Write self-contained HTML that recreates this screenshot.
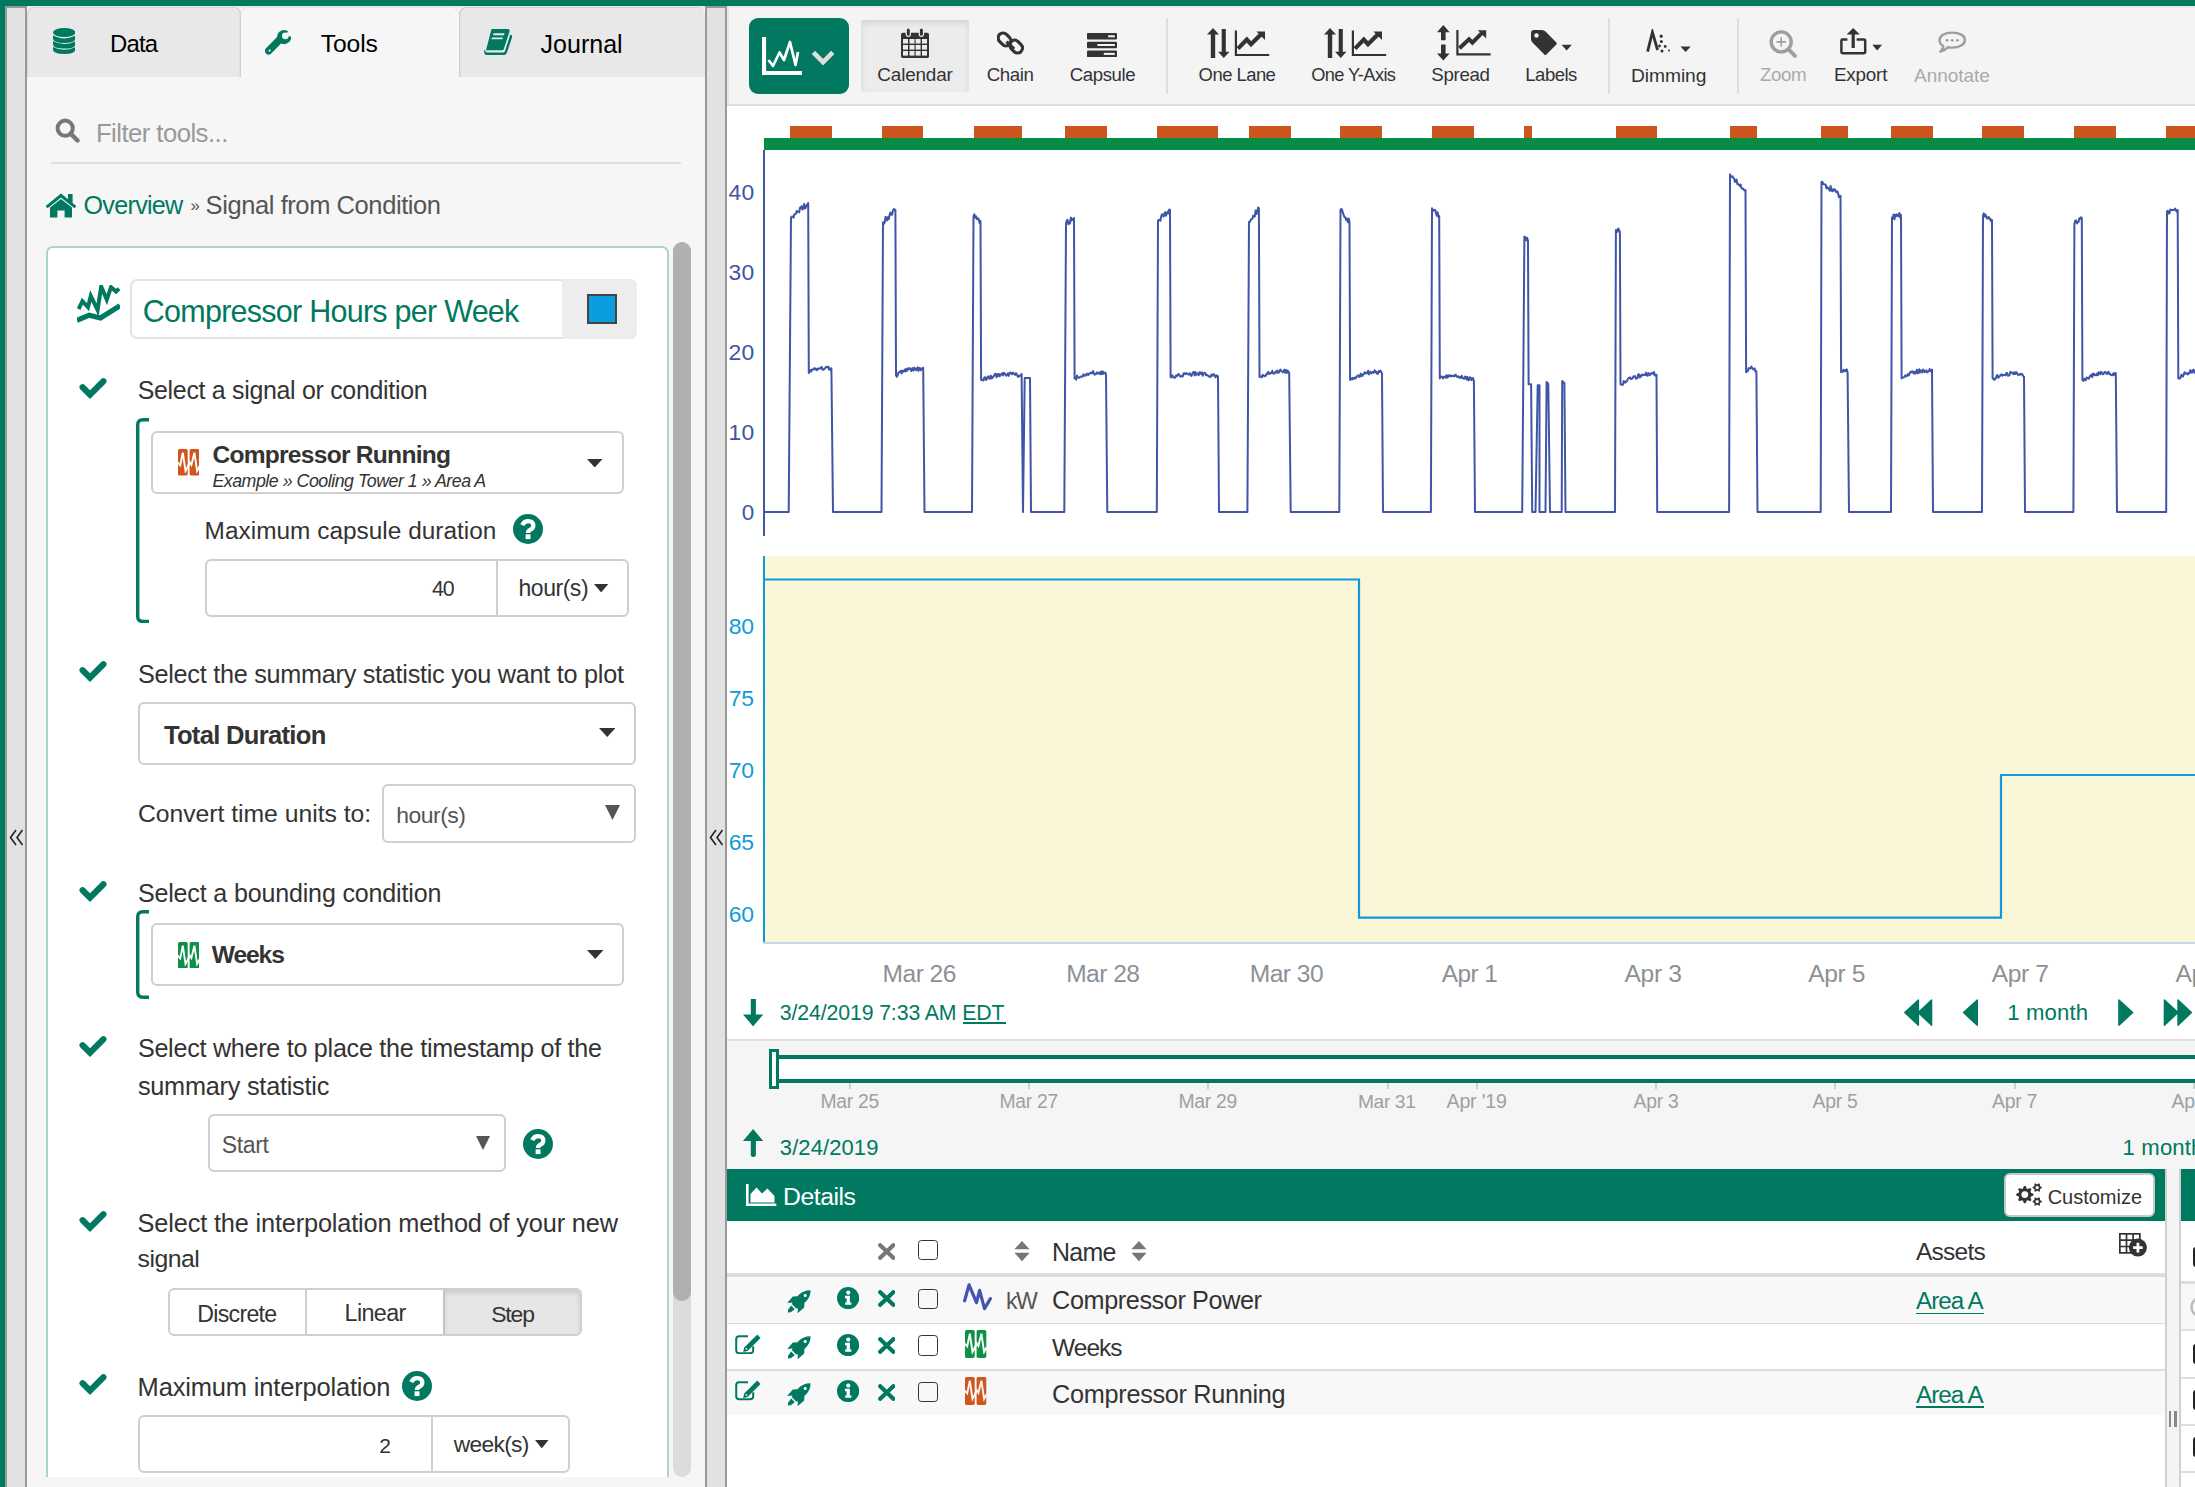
<!DOCTYPE html>
<html><head><meta charset="utf-8"><title>Seeq</title>
<style>html,body{margin:0;padding:0;width:2195px;height:1487px;overflow:hidden;background:#fff;font-family:"Liberation Sans",sans-serif}
body{position:relative}</style></head><body>
<div style="position:absolute;left:0.00px;top:0.00px;width:2195.00px;height:1487.00px;background:#fff"></div>
<div style="position:absolute;left:5.00px;top:6.00px;width:22.00px;height:1481.00px;background:#e2e2e2"></div>
<div style="position:absolute;left:5.00px;top:6.00px;width:2.00px;height:1481.00px;background:#999"></div>
<div style="position:absolute;left:25.00px;top:6.00px;width:2.00px;height:1481.00px;background:#999"></div>
<div style="position:absolute;left:27.00px;top:6.00px;width:678.00px;height:1481.00px;background:#f6f6f6"></div>
<div style="position:absolute;left:705.00px;top:6.00px;width:22.00px;height:1481.00px;background:#e2e2e2"></div>
<div style="position:absolute;left:705.00px;top:6.00px;width:2.00px;height:1481.00px;background:#999"></div>
<div style="position:absolute;left:725.00px;top:6.00px;width:2.00px;height:1481.00px;background:#999"></div>
<div style="position:absolute;left:705.00px;top:6.00px;width:22.00px;height:2.00px;background:#999"></div>
<div style="position:absolute;left:5.00px;top:6.00px;width:22.00px;height:1.50px;background:#999"></div>
<div style="position:absolute;left:27.00px;top:6.00px;width:678.00px;height:1.50px;background:#e9e9e9"></div>
<div style="position:absolute;left:0.00px;top:0.00px;width:2195.00px;height:6.00px;background:#007960"></div>
<div style="position:absolute;left:0.00px;top:0.00px;width:5.00px;height:1487.00px;background:#007960"></div>
<svg style="position:absolute;left:9.00px;top:829.00px;" width="15.00" height="17.00" viewBox="0 0 15 17" preserveAspectRatio="none"><path d="M7 1 L1.5 8.5 L7 16 M13.5 1 L8 8.5 L13.5 16" fill="none" stroke="#222" stroke-width="1.6"/></svg>
<svg style="position:absolute;left:709.00px;top:829.00px;" width="15.00" height="17.00" viewBox="0 0 15 17" preserveAspectRatio="none"><path d="M7 1 L1.5 8.5 L7 16 M13.5 1 L8 8.5 L13.5 16" fill="none" stroke="#222" stroke-width="1.6"/></svg>
<div style="position:absolute;left:27.00px;top:7.00px;width:214.00px;height:70.00px;background:#e8e8e8;border-radius:7px 7px 0 0;box-shadow:inset -1.3px 0 0 #d0d0d0, inset 1px 1px 0 #d6d6d6"></div>
<div style="position:absolute;left:241.00px;top:7.00px;width:218.00px;height:70.00px;background:#f6f6f6;border-radius:7px 7px 0 0;box-shadow:inset 0 1px 0 #e4e4e4"></div>
<div style="position:absolute;left:459.00px;top:7.00px;width:246.00px;height:70.00px;background:#e8e8e8;border-radius:7px 7px 0 0;box-shadow:inset 1.3px 1px 0 #d0d0d0"></div>
<svg style="position:absolute;left:52.80px;top:27.80px;" width="22.40" height="26.00" viewBox="0 0 22.4 26" preserveAspectRatio="none"><g fill="#007960">
<ellipse cx="11.2" cy="4.5" rx="11.2" ry="4.5"/>
<path d="M0 7.6 Q11.2 13.2 22.4 7.6 V10.6 Q22.4 15 11.2 15 Q0 15 0 10.6Z"/>
<path d="M0 13.2 Q11.2 18.8 22.4 13.2 V16.2 Q22.4 20.6 11.2 20.6 Q0 20.6 0 16.2Z"/>
<path d="M0 19 Q11.2 24.6 22.4 19 V21.6 Q22.4 26 11.2 26 Q0 26 0 21.6Z"/></g></svg>
<svg style="position:absolute;left:264.80px;top:29.80px;overflow:hidden" width="26.30" height="26.10" viewBox="0 0 26.3 26.1" preserveAspectRatio="none"><circle cx="19.1" cy="7.1" r="7.1" fill="#007960"/><path d="M20.2 6 L27.7 -7 L35.1 7.3 Z" fill="#f6f6f6"/><circle cx="20.3" cy="5.9" r="3.3" fill="#f6f6f6"/><path d="M14.2 10.2 L3.6 20.8" stroke="#007960" stroke-width="7.4" stroke-linecap="round"/><circle cx="4.6" cy="20.6" r="1.1" fill="#f6f6f6"/></svg>
<svg style="position:absolute;left:483.60px;top:28.70px;" width="28.60" height="26.10" viewBox="0 0 28.6 26.1" preserveAspectRatio="none"><g fill="#007960"><path d="M7.5 0 H24 Q26 0 25.5 2.5 L19.8 20 Q19.2 21.2 18 21.2 H2 Z"/>
<path d="M26.3 5.5 Q28.8 6 28 8.5 L22.8 24 Q22 26.1 19.5 26.1 H3.5 Q0 26.1 0.2 22 L0.8 20.6 Q1.5 23.5 3.2 23.5 H19.3 Q20.5 23.5 21 22 Z"/></g>
<g fill="#e8e8e8"><path d="M9.6 4.3 H20.5 L20 6.2 H9 Z"/><path d="M8 8.4 H19 L18.5 10.3 H7.4 Z"/></g></svg>
<div style="position:absolute;left:109.90px;top:32.48px;font-family:'Liberation Sans', sans-serif;font-size:23.90px;line-height:1;font-weight:400;font-style:normal;letter-spacing:-0.750px;color:#000;white-space:nowrap;">Data</div>
<div style="position:absolute;left:320.80px;top:31.84px;font-family:'Liberation Sans', sans-serif;font-size:24.66px;line-height:1;font-weight:400;font-style:normal;letter-spacing:-0.125px;color:#000;white-space:nowrap;">Tools</div>
<div style="position:absolute;left:540.50px;top:31.58px;font-family:'Liberation Sans', sans-serif;font-size:24.97px;line-height:1;font-weight:400;font-style:normal;letter-spacing:0.042px;color:#000;white-space:nowrap;">Journal</div>
<svg style="position:absolute;left:55.20px;top:118.00px;" width="25.00" height="25.00" viewBox="0 0 25 25" preserveAspectRatio="none"><circle cx="10.2" cy="10.2" r="7.6" fill="none" stroke="#777" stroke-width="4"/><path d="M15.5 15.5 L22.5 22.5" stroke="#777" stroke-width="4.4" stroke-linecap="round"/></svg>
<div style="position:absolute;left:95.90px;top:120.52px;font-family:'Liberation Sans', sans-serif;font-size:25.74px;line-height:1;font-weight:400;font-style:normal;letter-spacing:-0.554px;color:#999;white-space:nowrap;">Filter tools...</div>
<div style="position:absolute;left:50.70px;top:162.00px;width:630.30px;height:2.00px;background:#dedede"></div>
<svg style="position:absolute;left:45.20px;top:193.00px;" width="32.00" height="24.60" viewBox="0 0 32 24.6" preserveAspectRatio="none"><path fill="#007960" d="M16 0.6 L0.6 13 L2.6 15.2 L16 4.6 L29.4 15.2 L31.4 13 L27.6 10 V1 H23 V6.3 Z M5 14.6 L16 6 L27 14.6 V24.6 H19.6 V17.6 H12.4 V24.6 H5 Z"/></svg>
<div style="position:absolute;left:83.50px;top:193.30px;font-family:'Liberation Sans', sans-serif;font-size:25.17px;line-height:1;font-weight:400;font-style:normal;letter-spacing:-0.721px;color:#007960;white-space:nowrap;">Overview</div>
<div style="position:absolute;left:190.50px;top:197.68px;font-family:'Liberation Sans', sans-serif;font-size:16.61px;line-height:1;font-weight:400;font-style:normal;letter-spacing:0.000px;color:#555;white-space:nowrap;">»</div>
<div style="position:absolute;left:205.60px;top:193.04px;font-family:'Liberation Sans', sans-serif;font-size:25.49px;line-height:1;font-weight:400;font-style:normal;letter-spacing:-0.412px;color:#555;white-space:nowrap;">Signal from Condition</div>
<div style="position:absolute;left:673.00px;top:241.50px;width:18.00px;height:1235.00px;background:#dcdcdc;border-radius:9px"></div>
<div style="position:absolute;left:673.00px;top:241.50px;width:18.00px;height:1059.50px;background:#b0b0b0;border-radius:9px"></div>
<div style="position:absolute;left:0;top:0;width:2195px;height:1476.5px;overflow:hidden">
<div style="position:absolute;left:46.00px;top:246.00px;width:622.50px;height:1314.00px;background:#fff;border:2px solid #a9d6cb;border-radius:7px;box-sizing:border-box"></div>
</div>
<svg style="position:absolute;left:77.00px;top:285.00px;" width="43.00" height="38.00" viewBox="0 0 43 38" preserveAspectRatio="none"><path d="M1.6 24 L5.4 16.2 L11 22.2 L13.8 10.8 L20.6 25 L24.2 1.6 L29.8 14.6 L34 2.2 L39 6.6 L42 3.6" fill="none" stroke="#007960" stroke-width="4" stroke-linejoin="miter"/><path d="M0 35.4 L12.2 30.2 L23.5 33 L43 20.8" fill="none" stroke="#007960" stroke-width="5.2"/></svg>
<div style="position:absolute;left:130.20px;top:279.00px;width:506.80px;height:59.60px;background:#fff;border:2px solid #e3e3e3;border-radius:7px;box-sizing:border-box"></div>
<div style="position:absolute;left:561.70px;top:279.00px;width:75.30px;height:59.60px;background:#ededed;border-radius:0 7px 7px 0"></div>
<div style="position:absolute;left:587.20px;top:294.00px;width:30.30px;height:29.80px;background:#0c9de0;border:2px solid #444;box-sizing:border-box"></div>
<div style="position:absolute;left:142.80px;top:295.50px;font-family:'Liberation Sans', sans-serif;font-size:30.47px;line-height:1;font-weight:400;font-style:normal;letter-spacing:-0.727px;color:#007960;white-space:nowrap;">Compressor Hours per Week</div>
<svg style="position:absolute;left:79.00px;top:377.30px;" width="28.00" height="22.00" viewBox="0 0 28 22" preserveAspectRatio="none"><path d="M3.6 10.2 L11 17.6 L24.4 4.2" fill="none" stroke="#007960" stroke-width="6.2" stroke-linecap="round" stroke-linejoin="miter"/></svg>
<div style="position:absolute;left:137.70px;top:378.42px;font-family:'Liberation Sans', sans-serif;font-size:24.91px;line-height:1;font-weight:400;font-style:normal;letter-spacing:-0.289px;color:#333;white-space:nowrap;">Select a signal or condition</div>
<svg style="position:absolute;left:136.30px;top:418.30px;" width="14.00" height="205.20" viewBox="0 0 14 205.2" preserveAspectRatio="none"><path d="M13 1.7 H7 Q1.7 1.7 1.7 7 V198.2 Q1.7 203.5 7 203.5 H13" fill="none" stroke="#007960" stroke-width="3.4"/></svg>
<div style="position:absolute;left:150.80px;top:431.30px;width:473.40px;height:63.00px;background:#fff;border:2px solid #cfcfcf;border-radius:6px;box-sizing:border-box"></div>
<svg style="position:absolute;left:177.60px;top:449.40px;" width="21.50" height="26.50" viewBox="0 0 21.5 26.5" preserveAspectRatio="none"><rect x="0" y="0" width="9.7" height="26.5" rx="1.6" fill="#d0561b"/><rect x="11.6" y="0" width="9.7" height="26.5" rx="1.6" fill="#d0561b"/>
<path d="M-0.5 13.3 L2.2 16.5 L4.8 3.6 L7.5 21.9 L9.7 17.9 L11.6 13.3 L13.4 16 L16.4 3.6 L19.1 21.9 L21.5 17.5" fill="none" stroke="#fff" stroke-width="1.9" stroke-linejoin="miter"/></svg>
<div style="position:absolute;left:212.40px;top:443.24px;font-family:'Liberation Sans', sans-serif;font-size:24.54px;line-height:1;font-weight:700;font-style:normal;letter-spacing:-0.715px;color:#333;white-space:nowrap;">Compressor Running</div>
<div style="position:absolute;left:212.40px;top:472.66px;font-family:'Liberation Sans', sans-serif;font-size:17.81px;line-height:1;font-weight:400;font-style:italic;letter-spacing:-0.485px;color:#333;white-space:nowrap;">Example » Cooling Tower 1 » Area A</div>
<svg style="position:absolute;left:587.20px;top:458.60px;" width="15.50" height="8.50" viewBox="0 0 15.5 8.5" preserveAspectRatio="none"><path d="M0 0 H15.5 L7.75 8.5 Z" fill="#333"/></svg>
<div style="position:absolute;left:204.60px;top:519.17px;font-family:'Liberation Sans', sans-serif;font-size:24.39px;line-height:1;font-weight:400;font-style:normal;letter-spacing:0.022px;color:#333;white-space:nowrap;">Maximum capsule duration</div>
<svg style="position:absolute;left:513.30px;top:514.40px;" width="30.00" height="30.00" viewBox="0 0 30 30" preserveAspectRatio="none"><circle cx="15" cy="15" r="15" fill="#007960"/><path d="M9.3 11.2 Q11 7.2 15.2 7.2 Q20.3 7.2 20.3 11.8 Q20.3 14.4 17.3 15.8 Q15 16.9 15 19" fill="none" stroke="#fff" stroke-width="4.3"/><rect x="12.6" y="20.3" width="4.9" height="4.8" fill="#fff"/></svg>
<div style="position:absolute;left:204.60px;top:558.80px;width:424.90px;height:58.70px;background:#fff;border:2px solid #cfcfcf;border-radius:6px;box-sizing:border-box"></div>
<div style="position:absolute;left:495.80px;top:560.00px;width:2.00px;height:56.00px;background:#cfcfcf"></div>
<div style="position:absolute;left:432.00px;top:578.67px;font-family:'Liberation Sans', sans-serif;font-size:21.33px;line-height:1;font-weight:400;font-style:normal;letter-spacing:-1.150px;color:#333;white-space:nowrap;">40</div>
<div style="position:absolute;left:518.50px;top:577.26px;font-family:'Liberation Sans', sans-serif;font-size:22.99px;line-height:1;font-weight:400;font-style:normal;letter-spacing:-0.458px;color:#333;white-space:nowrap;">hour(s)</div>
<svg style="position:absolute;left:594.30px;top:584.00px;" width="14.30" height="8.40" viewBox="0 0 14.3 8.4" preserveAspectRatio="none"><path d="M0 0 H14.3 L7.15 8.4 Z" fill="#333"/></svg>
<svg style="position:absolute;left:79.00px;top:660.30px;" width="28.00" height="22.00" viewBox="0 0 28 22" preserveAspectRatio="none"><path d="M3.6 10.2 L11 17.6 L24.4 4.2" fill="none" stroke="#007960" stroke-width="6.2" stroke-linecap="round" stroke-linejoin="miter"/></svg>
<div style="position:absolute;left:137.90px;top:661.76px;font-family:'Liberation Sans', sans-serif;font-size:25.22px;line-height:1;font-weight:400;font-style:normal;letter-spacing:-0.263px;color:#333;white-space:nowrap;">Select the summary statistic you want to plot</div>
<div style="position:absolute;left:137.90px;top:701.50px;width:498.50px;height:63.10px;background:#fff;border:2px solid #cfcfcf;border-radius:6px;box-sizing:border-box"></div>
<div style="position:absolute;left:163.90px;top:722.97px;font-family:'Liberation Sans', sans-serif;font-size:25.57px;line-height:1;font-weight:700;font-style:normal;letter-spacing:-0.685px;color:#333;white-space:nowrap;">Total Duration</div>
<svg style="position:absolute;left:598.50px;top:728.00px;" width="16.50" height="9.00" viewBox="0 0 16.5 9" preserveAspectRatio="none"><path d="M0 0 H16.5 L8.25 9 Z" fill="#333"/></svg>
<div style="position:absolute;left:137.90px;top:802.35px;font-family:'Liberation Sans', sans-serif;font-size:24.76px;line-height:1;font-weight:400;font-style:normal;letter-spacing:-0.029px;color:#333;white-space:nowrap;">Convert time units to:</div>
<div style="position:absolute;left:382.00px;top:783.50px;width:254.40px;height:59.00px;background:#fff;border:2px solid #cfcfcf;border-radius:6px;box-sizing:border-box"></div>
<div style="position:absolute;left:396.30px;top:803.90px;font-family:'Liberation Sans', sans-serif;font-size:22.94px;line-height:1;font-weight:400;font-style:normal;letter-spacing:-0.508px;color:#555;white-space:nowrap;">hour(s)</div>
<svg style="position:absolute;left:605.40px;top:805.40px;" width="15.00" height="15.00" viewBox="0 0 15 15" preserveAspectRatio="none"><path d="M0 0 H15 L7.5 15 Z" fill="#555"/></svg>
<svg style="position:absolute;left:79.00px;top:879.50px;" width="28.00" height="22.00" viewBox="0 0 28 22" preserveAspectRatio="none"><path d="M3.6 10.2 L11 17.6 L24.4 4.2" fill="none" stroke="#007960" stroke-width="6.2" stroke-linecap="round" stroke-linejoin="miter"/></svg>
<div style="position:absolute;left:137.90px;top:881.10px;font-family:'Liberation Sans', sans-serif;font-size:25.06px;line-height:1;font-weight:400;font-style:normal;letter-spacing:-0.163px;color:#333;white-space:nowrap;">Select a bounding condition</div>
<svg style="position:absolute;left:136.30px;top:910.00px;" width="14.00" height="89.00" viewBox="0 0 14 89" preserveAspectRatio="none"><path d="M13 1.7 H7 Q1.7 1.7 1.7 7 V82 Q1.7 87.3 7 87.3 H13" fill="none" stroke="#007960" stroke-width="3.4"/></svg>
<div style="position:absolute;left:150.80px;top:923.40px;width:473.70px;height:63.10px;background:#fff;border:2px solid #cfcfcf;border-radius:6px;box-sizing:border-box"></div>
<svg style="position:absolute;left:177.60px;top:941.50px;" width="21.50" height="26.50" viewBox="0 0 21.5 26.5" preserveAspectRatio="none"><rect x="0" y="0" width="9.7" height="26.5" rx="1.6" fill="#0d9048"/><rect x="11.6" y="0" width="9.7" height="26.5" rx="1.6" fill="#0d9048"/>
<path d="M-0.5 13.3 L2.2 16.5 L4.8 3.6 L7.5 21.9 L9.7 17.9 L11.6 13.3 L13.4 16 L16.4 3.6 L19.1 21.9 L21.5 17.5" fill="none" stroke="#fff" stroke-width="1.9" stroke-linejoin="miter"/></svg>
<div style="position:absolute;left:211.70px;top:943.21px;font-family:'Liberation Sans', sans-serif;font-size:24.58px;line-height:1;font-weight:700;font-style:normal;letter-spacing:-1.062px;color:#333;white-space:nowrap;">Weeks</div>
<svg style="position:absolute;left:587.00px;top:950.20px;" width="16.50" height="9.00" viewBox="0 0 16.5 9" preserveAspectRatio="none"><path d="M0 0 H16.5 L8.25 9 Z" fill="#333"/></svg>
<svg style="position:absolute;left:79.00px;top:1035.00px;" width="28.00" height="22.00" viewBox="0 0 28 22" preserveAspectRatio="none"><path d="M3.6 10.2 L11 17.6 L24.4 4.2" fill="none" stroke="#007960" stroke-width="6.2" stroke-linecap="round" stroke-linejoin="miter"/></svg>
<div style="position:absolute;left:137.90px;top:1036.26px;font-family:'Liberation Sans', sans-serif;font-size:25.11px;line-height:1;font-weight:400;font-style:normal;letter-spacing:-0.254px;color:#333;white-space:nowrap;">Select where to place the timestamp of the</div>
<div style="position:absolute;left:137.90px;top:1073.82px;font-family:'Liberation Sans', sans-serif;font-size:25.28px;line-height:1;font-weight:400;font-style:normal;letter-spacing:-0.231px;color:#333;white-space:nowrap;">summary statistic</div>
<div style="position:absolute;left:207.60px;top:1113.70px;width:298.90px;height:58.70px;background:#fff;border:2px solid #cfcfcf;border-radius:6px;box-sizing:border-box"></div>
<div style="position:absolute;left:221.80px;top:1133.63px;font-family:'Liberation Sans', sans-serif;font-size:23.14px;line-height:1;font-weight:400;font-style:normal;letter-spacing:-0.425px;color:#555;white-space:nowrap;">Start</div>
<svg style="position:absolute;left:476.00px;top:1136.00px;" width="14.00" height="14.00" viewBox="0 0 14 14" preserveAspectRatio="none"><path d="M0 0 H14 L7.0 14 Z" fill="#555"/></svg>
<svg style="position:absolute;left:522.80px;top:1128.80px;" width="30.00" height="30.00" viewBox="0 0 30 30" preserveAspectRatio="none"><circle cx="15" cy="15" r="15" fill="#007960"/><path d="M9.3 11.2 Q11 7.2 15.2 7.2 Q20.3 7.2 20.3 11.8 Q20.3 14.4 17.3 15.8 Q15 16.9 15 19" fill="none" stroke="#fff" stroke-width="4.3"/><rect x="12.6" y="20.3" width="4.9" height="4.8" fill="#fff"/></svg>
<svg style="position:absolute;left:79.00px;top:1209.80px;" width="28.00" height="22.00" viewBox="0 0 28 22" preserveAspectRatio="none"><path d="M3.6 10.2 L11 17.6 L24.4 4.2" fill="none" stroke="#007960" stroke-width="6.2" stroke-linecap="round" stroke-linejoin="miter"/></svg>
<div style="position:absolute;left:137.60px;top:1211.26px;font-family:'Liberation Sans', sans-serif;font-size:25.34px;line-height:1;font-weight:400;font-style:normal;letter-spacing:-0.162px;color:#333;white-space:nowrap;">Select the interpolation method of your new</div>
<div style="position:absolute;left:137.60px;top:1247.15px;font-family:'Liberation Sans', sans-serif;font-size:24.77px;line-height:1;font-weight:400;font-style:normal;letter-spacing:-0.500px;color:#333;white-space:nowrap;">signal</div>
<div style="position:absolute;left:167.60px;top:1287.70px;width:414.70px;height:48.80px;background:#fff;border:2px solid #cfcfcf;border-radius:6px;box-sizing:border-box"></div>
<div style="position:absolute;left:444.00px;top:1289.70px;width:136.30px;height:44.80px;background:#e6e6e6;box-shadow:inset 0 3px 5px rgba(0,0,0,.125);border-radius:0 4px 4px 0"></div>
<div style="position:absolute;left:305.10px;top:1289.70px;width:2.00px;height:44.80px;background:#cfcfcf"></div>
<div style="position:absolute;left:443.00px;top:1289.70px;width:2.00px;height:44.80px;background:#c4c4c4"></div>
<div style="position:absolute;left:197.20px;top:1302.52px;font-family:'Liberation Sans', sans-serif;font-size:23.15px;line-height:1;font-weight:400;font-style:normal;letter-spacing:-0.693px;color:#333;white-space:nowrap;">Discrete</div>
<div style="position:absolute;left:344.60px;top:1302.32px;font-family:'Liberation Sans', sans-serif;font-size:23.38px;line-height:1;font-weight:400;font-style:normal;letter-spacing:-0.660px;color:#333;white-space:nowrap;">Linear</div>
<div style="position:absolute;left:491.20px;top:1302.72px;font-family:'Liberation Sans', sans-serif;font-size:22.91px;line-height:1;font-weight:400;font-style:normal;letter-spacing:-1.117px;color:#333;white-space:nowrap;">Step</div>
<svg style="position:absolute;left:79.00px;top:1373.40px;" width="28.00" height="22.00" viewBox="0 0 28 22" preserveAspectRatio="none"><path d="M3.6 10.2 L11 17.6 L24.4 4.2" fill="none" stroke="#007960" stroke-width="6.2" stroke-linecap="round" stroke-linejoin="miter"/></svg>
<div style="position:absolute;left:137.60px;top:1374.64px;font-family:'Liberation Sans', sans-serif;font-size:25.49px;line-height:1;font-weight:400;font-style:normal;letter-spacing:-0.172px;color:#333;white-space:nowrap;">Maximum interpolation</div>
<svg style="position:absolute;left:401.90px;top:1371.00px;" width="30.00" height="30.00" viewBox="0 0 30 30" preserveAspectRatio="none"><circle cx="15" cy="15" r="15" fill="#007960"/><path d="M9.3 11.2 Q11 7.2 15.2 7.2 Q20.3 7.2 20.3 11.8 Q20.3 14.4 17.3 15.8 Q15 16.9 15 19" fill="none" stroke="#fff" stroke-width="4.3"/><rect x="12.6" y="20.3" width="4.9" height="4.8" fill="#fff"/></svg>
<div style="position:absolute;left:0;top:0;width:2195px;height:1476.5px;overflow:hidden">
<div style="position:absolute;left:137.60px;top:1414.80px;width:432.90px;height:58.50px;background:#fff;border:2px solid #cfcfcf;border-radius:6px;box-sizing:border-box"></div>
<div style="position:absolute;left:430.60px;top:1416.80px;width:2.00px;height:56.20px;background:#cfcfcf"></div>
</div>
<div style="position:absolute;left:379.30px;top:1434.92px;font-family:'Liberation Sans', sans-serif;font-size:21.03px;line-height:1;font-weight:400;font-style:normal;letter-spacing:0.000px;color:#333;white-space:nowrap;">2</div>
<div style="position:absolute;left:453.75px;top:1433.49px;font-family:'Liberation Sans', sans-serif;font-size:22.72px;line-height:1;font-weight:400;font-style:normal;letter-spacing:-0.658px;color:#333;white-space:nowrap;">week(s)</div>
<svg style="position:absolute;left:535.40px;top:1440.00px;" width="13.50" height="8.40" viewBox="0 0 13.5 8.4" preserveAspectRatio="none"><path d="M0 0 H13.5 L6.75 8.4 Z" fill="#333"/></svg>
<div style="position:absolute;left:727.00px;top:6.00px;width:1468.00px;height:98.00px;background:#f4f4f4"></div>
<div style="position:absolute;left:727.00px;top:104.00px;width:1468.00px;height:2.00px;background:#dedede"></div>
<div style="position:absolute;left:727.00px;top:6.00px;width:1468.00px;height:1.50px;background:#e8e8e8"></div>
<div style="position:absolute;left:727.00px;top:6.00px;width:2.00px;height:98.00px;background:#e8e8e8"></div>
<div style="position:absolute;left:748.70px;top:18.00px;width:100.30px;height:75.70px;background:#007960;border-radius:9px"></div>
<svg style="position:absolute;left:761.70px;top:37.00px;" width="40.00" height="40.00" viewBox="0 0 40 40" preserveAspectRatio="none"><path d="M2 0 V36 H40" fill="none" stroke="#fff" stroke-width="4.2"/><path d="M6.5 23 L11 29 L17.5 15.5 L22 23 L28 5 L33.5 28 L36 15" fill="none" stroke="#fff" stroke-width="2.7" stroke-linejoin="round"/></svg>
<svg style="position:absolute;left:811.30px;top:50.00px;" width="24.20" height="15.70" viewBox="0 0 24.2 15.7" preserveAspectRatio="none"><path d="M2.4 2.4 L12.1 12.2 L21.8 2.4" fill="none" stroke="#dedede" stroke-width="4.6"/></svg>
<div style="position:absolute;left:861.00px;top:20.00px;width:108.00px;height:71.70px;background:#ececec;box-shadow:inset 0 3px 6px rgba(0,0,0,.10);border-radius:3px"></div>
<svg style="position:absolute;left:900.90px;top:28.20px;" width="28.00" height="30.00" viewBox="0 0 28 30" preserveAspectRatio="none"><rect x="0" y="4.8" width="28" height="25.2" rx="1.8" fill="#333"/>
<rect x="5.2" y="0" width="4.2" height="8.4" rx="2.1" fill="#333" stroke="#ececec" stroke-width="1.2"/><rect x="18.3" y="0" width="4.2" height="8.4" rx="2.1" fill="#333" stroke="#ececec" stroke-width="1.2"/>
<g fill="#ececec"><rect x="2" y="11" width="5" height="4.6"/><rect x="8.5" y="11" width="5" height="4.6"/><rect x="14.6" y="11" width="5" height="4.6"/><rect x="21" y="11" width="5" height="4.6"/>
<rect x="2" y="17" width="5" height="4.6"/><rect x="8.5" y="17" width="5" height="4.6"/><rect x="14.6" y="17" width="5" height="4.6"/><rect x="21" y="17" width="5" height="4.6"/>
<rect x="2" y="23" width="5" height="4.6"/><rect x="8.5" y="23" width="5" height="4.6"/><rect x="14.6" y="23" width="5" height="4.6"/><rect x="21" y="23" width="5" height="4.6"/></g></svg>
<svg style="position:absolute;left:997.10px;top:28.70px;" width="28.00" height="28.00" viewBox="0 0 28 28" preserveAspectRatio="none"><g fill="none" stroke="#333" stroke-width="3.2"><rect x="2.6" y="3.4" width="9.8" height="14" rx="4.9" transform="rotate(-45 7.5 10.4)"/><rect x="14.2" y="10.6" width="9.8" height="14" rx="4.9" transform="rotate(-45 19.1 17.6)"/><path d="M9.6 12.6 L17 20"/></g></svg>
<svg style="position:absolute;left:1087.40px;top:33.10px;" width="30.00" height="24.20" viewBox="0 0 30 24.2" preserveAspectRatio="none"><g fill="#333"><rect x="0" y="0" width="30" height="6.6" rx="1"/><rect x="0" y="8.8" width="30" height="6.4" rx="1"/><rect x="0" y="17.6" width="30" height="6.6" rx="1"/></g>
<g fill="#f4f4f4"><rect x="21.2" y="2.3" width="6.6" height="2"/><rect x="10.4" y="11" width="17.4" height="2"/><rect x="16.8" y="19.9" width="11" height="2"/></g></svg>
<svg style="position:absolute;left:1207.30px;top:27.70px;" width="63.00" height="31.00" viewBox="0 0 63 31" preserveAspectRatio="none"><g fill="#333"><path d="M6 0 L12 6.4 H8.2 V30 H3.8 V6.4 H0 Z"/><path d="M14.7 1 H18.8 V23.7 H22.5 L16.8 30 L11 23.7 H14.7 Z"/></g>
<path d="M28.9 2.6 V27 H62.2" fill="none" stroke="#333" stroke-width="2.2"/><path d="M31 20.6 L39.8 11.6 L44 16.2 L53.8 6.4" fill="none" stroke="#333" stroke-width="4.2"/><path d="M49.4 3.4 H58 V12 Z" fill="#333"/></svg>
<svg style="position:absolute;left:1323.50px;top:27.70px;" width="63.00" height="31.00" viewBox="0 0 63 31" preserveAspectRatio="none"><g fill="#333"><path d="M6 0 L12 6.4 H8.2 V30 H3.8 V6.4 H0 Z"/><path d="M14.7 1 H18.8 V23.7 H22.5 L16.8 30 L11 23.7 H14.7 Z"/></g>
<path d="M28.9 2.6 V27 H62.2" fill="none" stroke="#333" stroke-width="2.2"/><path d="M31 20.6 L39.8 11.6 L44 16.2 L53.8 6.4" fill="none" stroke="#333" stroke-width="4.2"/><path d="M49.4 3.4 H58 V12 Z" fill="#333"/></svg>
<svg style="position:absolute;left:1436.50px;top:25.10px;" width="54.00" height="36.00" viewBox="0 0 54 36" preserveAspectRatio="none"><g fill="#333"><path d="M6.3 0 L12.7 7.3 H8.6 V15.3 H4 V7.3 H0 Z"/><path d="M4 19.6 H8.6 V28.4 H12.7 L6.3 35.5 L0 28.4 H4 Z"/></g>
<path d="M20.4 5.1 V29.4 H53.6" fill="none" stroke="#333" stroke-width="2.2"/><path d="M22.5 23.2 L32 14.2 L35.4 17.6 L44.8 8.2" fill="none" stroke="#333" stroke-width="4"/><path d="M40.8 5.2 H49.2 V13.6 Z" fill="#333"/></svg>
<svg style="position:absolute;left:1530.90px;top:30.20px;" width="41.00" height="25.50" viewBox="0 0 41 25.5" preserveAspectRatio="none"><path d="M0 3 Q0 0 3 0 H11 Q13 0 14.5 1.6 L25.4 12.6 Q26.2 13.6 25.4 14.6 L15.4 24.6 Q14.4 25.6 13.4 24.6 L1.2 12.2 Q0 11 0 9.6 Z" fill="#333"/><circle cx="5.5" cy="5.5" r="2.2" fill="#f4f4f4"/><path d="M30.6 14.7 H40.8 L35.7 20.4 Z" fill="#333"/></svg>
<svg style="position:absolute;left:1646.30px;top:28.50px;" width="45.00" height="29.00" viewBox="0 0 45 29" preserveAspectRatio="none"><path d="M1.6 22.6 L6.4 3.2 L11.6 21" fill="none" stroke="#333" stroke-width="2.8"/><g fill="#333"><circle cx="15.2" cy="7.2" r="1.6"/><circle cx="15.4" cy="12.4" r="1.5"/><circle cx="13.6" cy="17" r="1.4"/><circle cx="19.2" cy="17.5" r="1.4"/><circle cx="16" cy="22" r="1.5"/><circle cx="23" cy="21.6" r="1"/></g><path d="M34.5 17.5 H44.7 L39.6 23 Z" fill="#333"/></svg>
<svg style="position:absolute;left:1768.00px;top:29.00px;" width="30.00" height="30.00" viewBox="0 0 30 30" preserveAspectRatio="none"><circle cx="13.2" cy="12.9" r="10" fill="none" stroke="#9e9e9e" stroke-width="3.4"/><path d="M20.4 20.2 L27 26.8" stroke="#9e9e9e" stroke-width="3.8" stroke-linecap="round"/><path d="M13.2 8.2 V17.6 M8.5 12.9 H17.9" stroke="#9e9e9e" stroke-width="1.6"/></svg>
<svg style="position:absolute;left:1839.70px;top:28.20px;" width="43.00" height="27.00" viewBox="0 0 43 27" preserveAspectRatio="none"><path d="M2.6 11.6 H7.4 M16.6 11.6 H24 Q25.2 11.6 25.2 12.8 V24.1 Q25.2 25.3 24 25.3 H2.6 Q1.4 25.3 1.4 24.1 V12.8 Q1.4 11.6 2.6 11.6" fill="none" stroke="#333" stroke-width="2.5"/>
<path d="M13.2 0 L19.8 6.6 H14.8 V20 H11.6 V6.6 H6.6 Z" fill="#333"/><path d="M32.3 16.7 H42.1 L37.2 22.4 Z" fill="#333"/></svg>
<svg style="position:absolute;left:1937.50px;top:30.50px;" width="29.00" height="22.50" viewBox="0 0 29 22.5" preserveAspectRatio="none"><path d="M14 1.6 C21.6 1.6 26.9 4.6 26.9 9.1 C26.9 13.6 21.6 16.6 14 16.6 C12.6 16.6 11.2 16.5 9.8 16.3 C7.8 18.4 5.4 19.7 2.4 20.6 C4.4 18.6 5.2 17 5.4 15.2 C2.8 13.8 1.6 11.7 1.6 9.1 C1.6 4.6 6.6 1.6 14 1.6 Z" fill="none" stroke="#9e9e9e" stroke-width="2.4" stroke-linejoin="round"/><g fill="#9e9e9e"><circle cx="9" cy="9.3" r="1.4"/><circle cx="14.2" cy="9.3" r="1.4"/><circle cx="19.4" cy="9.3" r="1.4"/></g></svg>
<div style="position:absolute;left:877.30px;top:65.81px;font-family:'Liberation Sans', sans-serif;font-size:18.93px;line-height:1;font-weight:400;font-style:normal;letter-spacing:-0.179px;color:#333;white-space:nowrap;">Calendar</div>
<div style="position:absolute;left:986.70px;top:65.99px;font-family:'Liberation Sans', sans-serif;font-size:18.72px;line-height:1;font-weight:400;font-style:normal;letter-spacing:-0.400px;color:#333;white-space:nowrap;">Chain</div>
<div style="position:absolute;left:1069.80px;top:66.10px;font-family:'Liberation Sans', sans-serif;font-size:18.59px;line-height:1;font-weight:400;font-style:normal;letter-spacing:-0.408px;color:#333;white-space:nowrap;">Capsule</div>
<div style="position:absolute;left:1198.60px;top:66.19px;font-family:'Liberation Sans', sans-serif;font-size:18.48px;line-height:1;font-weight:400;font-style:normal;letter-spacing:-0.550px;color:#333;white-space:nowrap;">One Lane</div>
<div style="position:absolute;left:1311.20px;top:66.44px;font-family:'Liberation Sans', sans-serif;font-size:18.19px;line-height:1;font-weight:400;font-style:normal;letter-spacing:-0.578px;color:#333;white-space:nowrap;">One Y-Axis</div>
<div style="position:absolute;left:1431.30px;top:66.00px;font-family:'Liberation Sans', sans-serif;font-size:18.70px;line-height:1;font-weight:400;font-style:normal;letter-spacing:-0.330px;color:#333;white-space:nowrap;">Spread</div>
<div style="position:absolute;left:1525.30px;top:66.17px;font-family:'Liberation Sans', sans-serif;font-size:18.50px;line-height:1;font-weight:400;font-style:normal;letter-spacing:-0.490px;color:#333;white-space:nowrap;">Labels</div>
<div style="position:absolute;left:1630.90px;top:65.55px;font-family:'Liberation Sans', sans-serif;font-size:19.24px;line-height:1;font-weight:400;font-style:normal;letter-spacing:-0.050px;color:#333;white-space:nowrap;">Dimming</div>
<div style="position:absolute;left:1833.90px;top:65.88px;font-family:'Liberation Sans', sans-serif;font-size:18.85px;line-height:1;font-weight:400;font-style:normal;letter-spacing:-0.190px;color:#333;white-space:nowrap;">Export</div>
<div style="position:absolute;left:1759.90px;top:65.98px;font-family:'Liberation Sans', sans-serif;font-size:18.73px;line-height:1;font-weight:400;font-style:normal;letter-spacing:-0.417px;color:#aaa;white-space:nowrap;">Zoom</div>
<div style="position:absolute;left:1914.00px;top:65.71px;font-family:'Liberation Sans', sans-serif;font-size:19.04px;line-height:1;font-weight:400;font-style:normal;letter-spacing:-0.050px;color:#aaa;white-space:nowrap;">Annotate</div>
<div style="position:absolute;left:1166.00px;top:18.00px;width:2.00px;height:75.50px;background:#dddddd"></div>
<div style="position:absolute;left:1608.20px;top:18.00px;width:2.00px;height:75.50px;background:#dddddd"></div>
<div style="position:absolute;left:1737.20px;top:18.00px;width:2.00px;height:75.50px;background:#dddddd"></div>
<div style="position:absolute;left:764.00px;top:137.60px;width:1431.00px;height:12.40px;background:#078c46"></div>
<div style="position:absolute;left:790.00px;top:125.60px;width:41.60px;height:12.00px;background:#cc561e"></div>
<div style="position:absolute;left:881.80px;top:125.60px;width:41.50px;height:12.00px;background:#cc561e"></div>
<div style="position:absolute;left:973.50px;top:125.60px;width:48.50px;height:12.00px;background:#cc561e"></div>
<div style="position:absolute;left:1065.30px;top:125.60px;width:41.60px;height:12.00px;background:#cc561e"></div>
<div style="position:absolute;left:1156.80px;top:125.60px;width:61.20px;height:12.00px;background:#cc561e"></div>
<div style="position:absolute;left:1249.00px;top:125.60px;width:41.70px;height:12.00px;background:#cc561e"></div>
<div style="position:absolute;left:1340.40px;top:125.60px;width:41.60px;height:12.00px;background:#cc561e"></div>
<div style="position:absolute;left:1432.20px;top:125.60px;width:41.70px;height:12.00px;background:#cc561e"></div>
<div style="position:absolute;left:1524.30px;top:125.60px;width:7.70px;height:12.00px;background:#cc561e"></div>
<div style="position:absolute;left:1615.60px;top:125.60px;width:41.70px;height:12.00px;background:#cc561e"></div>
<div style="position:absolute;left:1730.00px;top:125.60px;width:27.00px;height:12.00px;background:#cc561e"></div>
<div style="position:absolute;left:1821.30px;top:125.60px;width:27.20px;height:12.00px;background:#cc561e"></div>
<div style="position:absolute;left:1891.00px;top:125.60px;width:41.70px;height:12.00px;background:#cc561e"></div>
<div style="position:absolute;left:1982.20px;top:125.60px;width:41.80px;height:12.00px;background:#cc561e"></div>
<div style="position:absolute;left:2074.40px;top:125.60px;width:41.40px;height:12.00px;background:#cc561e"></div>
<div style="position:absolute;left:2166.20px;top:125.60px;width:33.80px;height:12.00px;background:#cc561e"></div>
<div style="position:absolute;left:763.00px;top:149.50px;width:2.00px;height:386.00px;background:#3f55a6"></div>
<div style="position:absolute;left:728.60px;top:181.37px;font-family:'Liberation Sans', sans-serif;font-size:22.85px;line-height:1;font-weight:400;font-style:normal;letter-spacing:0.150px;color:#3f55a6;white-space:nowrap;">40</div>
<div style="position:absolute;left:728.60px;top:261.37px;font-family:'Liberation Sans', sans-serif;font-size:22.85px;line-height:1;font-weight:400;font-style:normal;letter-spacing:0.150px;color:#3f55a6;white-space:nowrap;">30</div>
<div style="position:absolute;left:728.60px;top:341.37px;font-family:'Liberation Sans', sans-serif;font-size:22.85px;line-height:1;font-weight:400;font-style:normal;letter-spacing:0.150px;color:#3f55a6;white-space:nowrap;">20</div>
<div style="position:absolute;left:728.60px;top:421.37px;font-family:'Liberation Sans', sans-serif;font-size:22.85px;line-height:1;font-weight:400;font-style:normal;letter-spacing:0.150px;color:#3f55a6;white-space:nowrap;">10</div>
<div style="position:absolute;left:741.80px;top:501.76px;font-family:'Liberation Sans', sans-serif;font-size:22.40px;line-height:1;font-weight:400;font-style:normal;letter-spacing:0.000px;color:#3f55a6;white-space:nowrap;">0</div>
<svg style="position:absolute;left:0;top:0" width="2195" height="1487" viewBox="0 0 2195 1487"><path d="M765.0 512.0 L788.7 512.0 L791.0 217.5 L791.8 216.5 L792.6 216.5 L793.5 217.8 L794.3 214.5 L795.1 214.1 L795.9 213.8 L796.7 210.9 L797.6 212.0 L798.4 212.0 L799.2 212.2 L800.0 207.6 L800.8 208.1 L801.6 206.2 L802.5 209.6 L803.3 208.2 L804.1 203.9 L804.9 208.5 L805.7 207.7 L806.6 205.2 L807.4 204.3 L808.2 203.0 L808.8 373.0 L809.6 371.2 L810.4 370.1 L811.2 371.7 L812.0 369.4 L812.8 369.5 L813.6 369.2 L814.5 368.0 L815.3 369.4 L816.1 368.9 L816.9 370.2 L817.7 368.7 L818.5 368.9 L819.3 368.2 L820.1 368.6 L820.9 367.7 L821.7 366.9 L822.5 369.7 L823.3 369.7 L824.1 369.1 L824.9 368.6 L825.8 367.1 L826.6 366.9 L827.4 367.3 L828.2 366.6 L829.0 369.5 L829.8 368.2 L830.6 370.2 L831.4 368.5 L833.0 512.0 L881.5 512.0 L883.0 222.2 L883.8 223.9 L884.7 222.5 L885.5 216.9 L886.3 217.3 L887.1 220.4 L888.0 217.1 L888.8 219.1 L889.6 215.0 L890.4 212.4 L891.3 214.7 L892.1 214.7 L892.9 211.0 L893.7 209.1 L894.6 209.7 L895.4 209.8 L896.0 375.3 L896.8 376.7 L897.6 375.4 L898.4 372.4 L899.2 372.5 L900.0 371.5 L900.8 370.9 L901.6 373.5 L902.4 370.6 L903.2 371.8 L904.0 371.0 L904.8 369.6 L905.6 371.5 L906.4 368.8 L907.2 370.6 L908.0 368.3 L908.8 369.3 L909.6 368.3 L910.4 368.3 L911.2 371.0 L912.0 370.2 L912.8 368.1 L913.6 370.4 L914.4 367.7 L915.2 368.4 L916.0 370.2 L916.8 369.4 L917.6 367.3 L918.4 370.9 L919.2 367.9 L920.0 368.1 L920.8 370.3 L921.6 368.6 L922.4 368.6 L923.2 367.8 L924.5 512.0 L972.0 512.0 L973.5 216.0 L974.4 214.3 L975.2 217.7 L976.1 216.4 L977.0 219.1 L977.9 218.4 L978.8 219.5 L979.6 222.9 L980.5 221.0 L981.1 380.0 L981.9 379.7 L982.7 379.7 L983.5 380.6 L984.3 377.6 L985.1 377.2 L986.0 380.0 L986.8 379.3 L987.6 376.8 L988.4 376.3 L989.2 378.3 L990.0 378.8 L990.8 375.6 L991.6 378.4 L992.4 377.9 L993.2 376.6 L994.1 375.6 L994.9 374.2 L995.7 373.7 L996.5 377.3 L997.3 374.2 L998.1 375.9 L998.9 374.0 L999.7 376.2 L1000.5 375.1 L1001.4 373.8 L1002.2 373.3 L1003.0 375.4 L1003.8 372.7 L1004.6 373.3 L1005.4 374.6 L1006.2 375.7 L1007.0 374.7 L1007.8 373.4 L1008.6 375.9 L1009.5 373.1 L1010.3 372.4 L1011.1 373.4 L1011.9 374.2 L1012.7 372.7 L1013.5 373.2 L1014.3 374.0 L1015.1 374.9 L1015.9 373.2 L1016.7 374.2 L1017.6 376.4 L1018.4 376.9 L1019.2 375.6 L1020.0 375.9 L1020.8 375.5 L1021.6 373.9 L1023.0 512.0 L1024.7 378.0 L1030.0 378.0 L1031.0 512.0 L1064.3 512.0 L1066.0 223.7 L1066.8 220.5 L1067.6 219.9 L1068.4 224.3 L1069.2 222.5 L1070.0 223.4 L1070.8 217.6 L1071.6 220.5 L1072.4 219.0 L1073.2 219.9 L1074.0 218.0 L1074.6 378.4 L1075.4 377.3 L1076.2 379.7 L1077.0 375.6 L1077.8 377.2 L1078.6 377.6 L1079.4 377.9 L1080.2 376.9 L1081.0 376.4 L1081.8 376.5 L1082.7 376.7 L1083.5 374.2 L1084.3 375.2 L1085.1 375.8 L1085.9 375.5 L1086.7 373.5 L1087.5 374.8 L1088.3 374.9 L1089.1 373.5 L1089.9 373.6 L1090.7 372.5 L1091.5 373.2 L1092.3 373.2 L1093.1 371.1 L1093.9 373.3 L1094.7 374.7 L1095.5 374.2 L1096.3 373.6 L1097.1 372.3 L1097.9 373.7 L1098.8 373.1 L1099.6 372.6 L1100.4 374.3 L1101.2 371.4 L1102.0 374.1 L1102.8 371.4 L1103.6 373.7 L1104.4 373.4 L1105.2 372.5 L1106.0 374.5 L1107.3 512.0 L1156.8 512.0 L1158.0 220.6 L1158.8 219.9 L1159.6 219.8 L1160.4 220.8 L1161.2 216.4 L1162.0 214.3 L1162.8 215.2 L1163.6 216.6 L1164.4 213.2 L1165.2 212.3 L1166.0 215.7 L1166.8 213.6 L1167.6 211.6 L1168.4 213.4 L1169.2 209.6 L1170.0 209.8 L1170.6 376.9 L1171.4 377.4 L1172.2 375.4 L1173.0 376.1 L1173.8 377.5 L1174.6 377.8 L1175.4 377.5 L1176.2 375.3 L1177.0 376.0 L1177.8 374.8 L1178.6 373.9 L1179.4 375.2 L1180.2 376.5 L1181.0 376.4 L1181.8 375.7 L1182.7 376.6 L1183.5 373.7 L1184.3 373.2 L1185.1 374.2 L1185.9 373.5 L1186.7 373.1 L1187.5 373.9 L1188.3 374.6 L1189.1 374.1 L1189.9 373.3 L1190.7 375.3 L1191.5 375.9 L1192.3 373.7 L1193.1 372.2 L1193.9 372.0 L1194.7 375.4 L1195.5 372.1 L1196.3 374.8 L1197.1 374.2 L1197.9 373.2 L1198.7 375.2 L1199.5 372.2 L1200.3 372.7 L1201.1 374.0 L1201.9 372.4 L1202.7 375.7 L1203.5 373.4 L1204.3 373.1 L1205.1 372.8 L1205.9 375.3 L1206.8 374.7 L1207.6 375.5 L1208.4 375.7 L1209.2 376.5 L1210.0 377.2 L1210.8 376.3 L1211.6 374.5 L1212.4 375.7 L1213.2 374.7 L1214.0 374.2 L1214.8 376.2 L1215.6 377.3 L1216.4 375.3 L1217.2 375.8 L1218.0 376.3 L1219.0 512.0 L1247.4 512.0 L1249.0 222.0 L1249.8 222.0 L1250.7 219.8 L1251.5 219.2 L1252.3 218.9 L1253.1 215.7 L1254.0 216.8 L1254.8 216.3 L1255.6 210.6 L1256.4 214.1 L1257.2 211.8 L1258.1 207.4 L1258.9 208.3 L1259.5 376.9 L1260.3 376.3 L1261.1 376.6 L1261.9 377.4 L1262.7 374.9 L1263.5 375.3 L1264.3 376.2 L1265.1 375.5 L1265.9 375.8 L1266.7 373.5 L1267.5 374.0 L1268.3 371.9 L1269.1 373.7 L1269.9 373.8 L1270.7 372.9 L1271.5 373.0 L1272.3 370.8 L1273.1 373.4 L1273.9 373.5 L1274.8 373.4 L1275.6 371.5 L1276.4 372.5 L1277.2 370.5 L1278.0 372.8 L1278.8 372.6 L1279.6 370.6 L1280.4 369.5 L1281.2 371.0 L1282.0 371.5 L1282.8 372.4 L1283.6 371.4 L1284.4 369.6 L1285.2 372.8 L1286.0 370.0 L1286.8 373.0 L1287.6 370.6 L1288.4 371.4 L1289.2 373.4 L1290.7 512.0 L1339.3 512.0 L1340.5 209.8 L1341.3 208.9 L1342.1 210.1 L1343.0 213.2 L1343.8 215.5 L1344.6 217.2 L1345.4 217.5 L1346.2 220.1 L1347.0 218.6 L1347.9 222.3 L1348.7 218.6 L1349.5 222.0 L1350.1 380.0 L1350.9 378.4 L1351.7 379.2 L1352.6 377.8 L1353.4 379.2 L1354.2 378.4 L1355.0 377.5 L1355.8 378.4 L1356.6 376.8 L1357.5 375.5 L1358.3 375.4 L1359.1 376.9 L1359.9 376.7 L1360.7 373.6 L1361.6 375.9 L1362.4 376.1 L1363.2 374.0 L1364.0 374.0 L1364.8 372.2 L1365.6 373.3 L1366.5 373.0 L1367.3 373.2 L1368.1 370.8 L1368.9 374.4 L1369.7 372.5 L1370.5 371.9 L1371.4 373.4 L1372.2 372.4 L1373.0 372.0 L1373.8 372.8 L1374.6 370.3 L1375.5 372.2 L1376.3 371.7 L1377.1 373.8 L1377.9 373.7 L1378.7 371.1 L1379.5 372.0 L1380.4 370.6 L1381.2 371.9 L1382.0 373.5 L1383.0 512.0 L1430.9 512.0 L1432.0 208.3 L1432.8 211.4 L1433.6 209.9 L1434.4 209.8 L1435.2 210.0 L1436.0 213.2 L1436.8 215.8 L1437.6 212.2 L1438.4 216.7 L1439.2 216.0 L1439.8 378.4 L1440.6 376.3 L1441.4 376.8 L1442.2 376.8 L1443.0 378.4 L1443.9 376.8 L1444.7 376.7 L1445.5 377.6 L1446.3 375.4 L1447.1 377.8 L1447.9 375.2 L1448.7 376.7 L1449.5 375.5 L1450.4 375.2 L1451.2 376.5 L1452.0 376.0 L1452.8 375.7 L1453.6 375.8 L1454.4 376.3 L1455.2 374.8 L1456.0 375.0 L1456.8 376.7 L1457.7 376.8 L1458.5 376.4 L1459.3 377.8 L1460.1 376.9 L1460.9 378.0 L1461.7 375.7 L1462.5 377.8 L1463.3 378.3 L1464.2 378.8 L1465.0 376.6 L1465.8 376.8 L1466.6 379.5 L1467.4 376.9 L1468.2 380.2 L1469.0 380.0 L1469.8 377.2 L1470.7 377.9 L1471.5 380.1 L1472.3 378.5 L1473.1 378.1 L1473.9 381.3 L1475.0 512.0 L1522.2 512.0 L1524.4 236.6 L1525.3 237.3 L1526.2 240.4 L1527.1 237.8 L1528.0 241.0 L1528.6 384.2 L1531.1 384.2 L1532.2 512.0 L1535.5 512.0 L1537.7 385.3 L1539.5 385.3 L1539.5 512.0 L1545.5 512.0 L1546.6 382.0 L1548.3 384.0 L1550.0 512.0 L1561.7 512.0 L1562.2 381.0 L1564.4 383.3 L1565.5 512.0 L1615.0 512.0 L1615.9 230.0 L1616.7 229.9 L1617.5 231.8 L1618.3 228.5 L1619.1 229.9 L1619.9 232.0 L1620.5 384.2 L1621.3 384.5 L1622.1 385.0 L1622.9 384.8 L1623.7 380.9 L1624.5 382.1 L1625.3 382.7 L1626.1 381.2 L1626.9 381.5 L1627.7 379.2 L1628.5 378.3 L1629.3 378.0 L1630.1 377.4 L1630.9 379.1 L1631.7 378.6 L1632.5 378.5 L1633.3 376.5 L1634.1 376.3 L1634.9 376.1 L1635.7 378.3 L1636.5 378.7 L1637.3 378.2 L1638.1 374.6 L1638.9 374.2 L1639.7 377.6 L1640.5 375.4 L1641.3 376.5 L1642.1 374.5 L1642.9 374.9 L1643.7 375.0 L1644.5 374.5 L1645.3 375.1 L1646.1 372.6 L1646.9 375.3 L1647.7 375.8 L1648.5 373.1 L1649.3 374.1 L1650.1 375.2 L1650.9 373.8 L1651.7 372.9 L1652.5 372.8 L1653.3 374.1 L1654.1 372.1 L1654.9 375.6 L1655.7 375.2 L1656.5 374.8 L1657.2 512.0 L1729.1 512.0 L1730.0 174.2 L1730.8 177.1 L1731.6 176.6 L1732.4 176.2 L1733.3 178.1 L1734.1 178.4 L1734.9 181.9 L1735.7 181.7 L1736.5 179.5 L1737.3 184.0 L1738.2 183.9 L1739.0 184.9 L1739.8 185.9 L1740.6 184.5 L1741.4 188.1 L1742.2 188.8 L1743.1 188.6 L1743.9 189.8 L1744.7 190.7 L1745.5 190.0 L1746.1 372.2 L1747.0 370.9 L1747.8 371.3 L1748.7 368.0 L1749.5 368.5 L1750.4 368.6 L1751.2 366.5 L1752.1 367.8 L1753.0 369.2 L1753.8 369.4 L1754.7 368.4 L1755.5 371.8 L1756.4 371.4 L1757.5 512.0 L1820.7 512.0 L1821.5 182.0 L1822.3 181.7 L1823.2 184.1 L1824.0 184.2 L1824.8 184.6 L1825.6 184.4 L1826.5 188.5 L1827.3 187.1 L1828.1 188.0 L1828.9 188.9 L1829.8 190.8 L1830.6 186.0 L1831.4 190.0 L1832.2 191.3 L1833.1 189.2 L1833.9 190.6 L1834.7 189.2 L1835.5 190.6 L1836.4 192.3 L1837.2 191.3 L1838.0 192.8 L1838.8 197.1 L1839.7 195.7 L1840.5 196.0 L1841.1 372.2 L1841.9 371.1 L1842.7 371.9 L1843.5 369.7 L1844.3 371.2 L1845.2 370.0 L1846.0 371.3 L1846.8 369.4 L1847.6 372.6 L1849.0 512.0 L1891.0 512.0 L1892.0 217.5 L1892.8 218.7 L1893.6 214.5 L1894.5 219.2 L1895.3 214.7 L1896.1 216.2 L1896.9 214.3 L1897.7 215.9 L1898.5 216.3 L1899.4 213.0 L1900.2 217.7 L1901.0 215.0 L1901.6 378.4 L1902.4 377.6 L1903.2 377.6 L1904.0 377.4 L1904.8 376.1 L1905.6 375.3 L1906.4 376.4 L1907.2 375.6 L1908.0 374.1 L1908.8 375.4 L1909.6 373.4 L1910.4 371.9 L1911.2 372.4 L1912.0 371.3 L1912.8 371.4 L1913.6 373.5 L1914.4 371.8 L1915.2 373.6 L1916.0 372.8 L1916.8 369.8 L1917.6 373.3 L1918.4 373.0 L1919.2 369.3 L1920.0 372.5 L1920.8 370.5 L1921.6 370.6 L1922.4 372.5 L1923.2 369.5 L1924.0 370.6 L1924.8 372.2 L1925.6 371.4 L1926.4 370.4 L1927.2 372.4 L1928.0 371.8 L1928.8 371.0 L1929.6 369.0 L1930.4 371.1 L1931.2 370.5 L1932.0 369.5 L1933.0 512.0 L1982.0 512.0 L1983.0 215.5 L1983.8 213.4 L1984.6 216.5 L1985.5 214.6 L1986.3 216.8 L1987.1 218.5 L1987.9 217.7 L1988.7 217.0 L1989.5 219.2 L1990.4 218.7 L1991.2 221.1 L1992.0 220.0 L1992.6 378.4 L1993.4 378.2 L1994.2 379.8 L1995.0 379.3 L1995.8 378.1 L1996.6 375.8 L1997.4 375.0 L1998.2 377.8 L1999.0 377.1 L1999.8 376.2 L2000.7 374.9 L2001.5 374.3 L2002.3 375.7 L2003.1 375.0 L2003.9 374.9 L2004.7 374.9 L2005.5 375.3 L2006.3 372.9 L2007.1 373.0 L2007.9 375.8 L2008.7 375.5 L2009.5 375.3 L2010.3 371.9 L2011.1 371.9 L2011.9 372.8 L2012.7 373.4 L2013.5 374.2 L2014.3 372.2 L2015.1 374.0 L2015.9 372.2 L2016.8 372.4 L2017.6 374.8 L2018.4 374.5 L2019.2 374.9 L2020.0 374.0 L2020.8 374.6 L2021.6 373.7 L2022.4 374.4 L2023.2 376.1 L2024.0 376.7 L2025.0 512.0 L2073.4 512.0 L2074.4 223.7 L2075.2 220.7 L2076.0 220.3 L2076.9 223.5 L2077.7 221.9 L2078.5 222.0 L2079.3 218.3 L2080.2 218.8 L2081.0 217.3 L2081.8 218.0 L2082.4 380.0 L2083.2 380.9 L2084.0 378.7 L2084.8 379.5 L2085.7 380.4 L2086.5 377.4 L2087.3 378.0 L2088.1 378.4 L2088.9 378.7 L2089.7 376.4 L2090.5 375.9 L2091.4 374.5 L2092.2 377.3 L2093.0 373.8 L2093.8 373.6 L2094.6 375.3 L2095.4 374.7 L2096.2 375.3 L2097.1 373.5 L2097.9 375.2 L2098.7 372.3 L2099.5 372.7 L2100.3 374.3 L2101.1 371.9 L2102.0 372.7 L2102.8 374.3 L2103.6 374.1 L2104.4 372.4 L2105.2 371.8 L2106.0 372.7 L2106.8 374.1 L2107.7 372.7 L2108.5 371.7 L2109.3 374.1 L2110.1 373.6 L2110.9 375.1 L2111.7 375.2 L2112.5 375.2 L2113.4 373.3 L2114.2 374.9 L2115.0 372.9 L2115.8 373.1 L2117.0 512.0 L2166.2 512.0 L2167.0 211.4 L2167.8 210.7 L2168.6 213.6 L2169.5 213.3 L2170.3 209.6 L2171.1 210.1 L2171.9 210.0 L2172.8 209.9 L2173.6 210.0 L2174.4 209.8 L2175.2 208.6 L2176.1 210.6 L2176.9 211.8 L2177.7 210.0 L2178.3 378.4 L2179.1 378.0 L2179.9 378.6 L2180.7 376.9 L2181.5 374.8 L2182.3 376.6 L2183.1 376.6 L2183.9 373.7 L2184.7 372.2 L2185.5 373.7 L2186.3 373.5 L2187.1 373.2 L2187.9 374.5 L2188.7 372.9 L2189.6 373.3 L2190.4 370.1 L2191.2 371.9 L2192.0 372.8 L2192.8 369.9 L2193.6 369.8 L2194.4 372.4 L2195.2 373.1 L2196.0 369.9 L2196.8 372.1 L2197.6 370.3 L2198.4 372.8 L2199.2 372.5 L2200.0 371.0 L2201.0 512.0" fill="none" stroke="#3f55a6" stroke-width="2" stroke-linejoin="round"/></svg>
<div style="position:absolute;left:765.00px;top:556.00px;width:1430.00px;height:386.00px;background:#faf6d8"></div>
<div style="position:absolute;left:763.00px;top:556.00px;width:2.00px;height:386.00px;background:#0e9bd9"></div>
<div style="position:absolute;left:763.00px;top:942.00px;width:1432.00px;height:2.00px;background:#ccd6eb"></div>
<svg style="position:absolute;left:0;top:0" width="2195" height="1487" viewBox="0 0 2195 1487"><path d="M765 579.5 H1359 V917.6 H2001 V775 H2200" fill="none" stroke="#0e9bd9" stroke-width="2.2"/></svg>
<div style="position:absolute;left:728.80px;top:615.30px;font-family:'Liberation Sans', sans-serif;font-size:22.94px;line-height:1;font-weight:400;font-style:normal;letter-spacing:-0.300px;color:#0e9bd9;white-space:nowrap;">80</div>
<div style="position:absolute;left:728.80px;top:687.30px;font-family:'Liberation Sans', sans-serif;font-size:22.94px;line-height:1;font-weight:400;font-style:normal;letter-spacing:-0.300px;color:#0e9bd9;white-space:nowrap;">75</div>
<div style="position:absolute;left:728.80px;top:759.30px;font-family:'Liberation Sans', sans-serif;font-size:22.94px;line-height:1;font-weight:400;font-style:normal;letter-spacing:-0.300px;color:#0e9bd9;white-space:nowrap;">70</div>
<div style="position:absolute;left:728.80px;top:831.30px;font-family:'Liberation Sans', sans-serif;font-size:22.94px;line-height:1;font-weight:400;font-style:normal;letter-spacing:-0.300px;color:#0e9bd9;white-space:nowrap;">65</div>
<div style="position:absolute;left:728.80px;top:903.30px;font-family:'Liberation Sans', sans-serif;font-size:22.94px;line-height:1;font-weight:400;font-style:normal;letter-spacing:-0.300px;color:#0e9bd9;white-space:nowrap;">60</div>
<div style="position:absolute;left:882.60px;top:962.32px;font-family:'Liberation Sans', sans-serif;font-size:24.56px;line-height:1;font-weight:400;font-style:normal;letter-spacing:-0.520px;color:#8b9197;white-space:nowrap;">Mar 26</div>
<div style="position:absolute;left:1066.20px;top:962.32px;font-family:'Liberation Sans', sans-serif;font-size:24.56px;line-height:1;font-weight:400;font-style:normal;letter-spacing:-0.520px;color:#8b9197;white-space:nowrap;">Mar 28</div>
<div style="position:absolute;left:1249.70px;top:962.31px;font-family:'Liberation Sans', sans-serif;font-size:24.58px;line-height:1;font-weight:400;font-style:normal;letter-spacing:-0.500px;color:#8b9197;white-space:nowrap;">Mar 30</div>
<div style="position:absolute;left:1441.70px;top:962.42px;font-family:'Liberation Sans', sans-serif;font-size:24.45px;line-height:1;font-weight:400;font-style:normal;letter-spacing:-0.562px;color:#8b9197;white-space:nowrap;">Apr 1</div>
<div style="position:absolute;left:1624.60px;top:962.29px;font-family:'Liberation Sans', sans-serif;font-size:24.60px;line-height:1;font-weight:400;font-style:normal;letter-spacing:-0.387px;color:#8b9197;white-space:nowrap;">Apr 3</div>
<div style="position:absolute;left:1808.20px;top:962.29px;font-family:'Liberation Sans', sans-serif;font-size:24.60px;line-height:1;font-weight:400;font-style:normal;letter-spacing:-0.387px;color:#8b9197;white-space:nowrap;">Apr 5</div>
<div style="position:absolute;left:1991.80px;top:962.29px;font-family:'Liberation Sans', sans-serif;font-size:24.60px;line-height:1;font-weight:400;font-style:normal;letter-spacing:-0.387px;color:#8b9197;white-space:nowrap;">Apr 7</div>
<div style="position:absolute;left:2175.40px;top:962.29px;font-family:'Liberation Sans', sans-serif;font-size:24.60px;line-height:1;font-weight:400;font-style:normal;letter-spacing:-0.387px;color:#8b9197;white-space:nowrap;">Apr 9</div>
<svg style="position:absolute;left:742.90px;top:998.70px;" width="20.20" height="27.40" viewBox="0 0 20.2 27.4" preserveAspectRatio="none"><path d="M7.8 0 H12.9 V15.5 H20.2 L10.1 27.4 L0 15.5 H7.8 Z" fill="#007960"/></svg>
<div style="position:absolute;left:779.80px;top:1002.62px;font-family:'Liberation Sans', sans-serif;font-size:21.27px;line-height:1;font-weight:400;font-style:normal;letter-spacing:-0.115px;color:#007960;white-space:nowrap;">3/24/2019 7:33 AM EDT</div>
<div style="position:absolute;left:963.00px;top:1022.40px;width:42.50px;height:2.00px;background:#007960"></div>
<svg style="position:absolute;left:0;top:0" width="2195" height="1487" viewBox="0 0 2195 1487"><path d="M1918.3999999999999 1000 V1025.2 L1904.8 1012.6 Z" fill="#007960" stroke="#007960" stroke-width="1.4" stroke-linejoin="round"/><path d="M1931.6000000000001 1000 V1025.2 L1918.2 1012.6 Z" fill="#007960" stroke="#007960" stroke-width="1.4" stroke-linejoin="round"/><path d="M1977.3 1000 V1025.2 L1963.5 1012.6 Z" fill="#007960" stroke="#007960" stroke-width="1.4" stroke-linejoin="round"/><path d="M2118.9 1000 V1025.2 L2132.7000000000003 1012.6 Z" fill="#007960" stroke="#007960" stroke-width="1.4" stroke-linejoin="round"/><path d="M2164.4 1000 V1025.2 L2178.0 1012.6 Z" fill="#007960" stroke="#007960" stroke-width="1.4" stroke-linejoin="round"/><path d="M2178 1000 V1025.2 L2191.4 1012.6 Z" fill="#007960" stroke="#007960" stroke-width="1.4" stroke-linejoin="round"/></svg>
<div style="position:absolute;left:2007.30px;top:1001.77px;font-family:'Liberation Sans', sans-serif;font-size:22.15px;line-height:1;font-weight:400;font-style:normal;letter-spacing:0.125px;color:#007960;white-space:nowrap;">1 month</div>
<div style="position:absolute;left:727.00px;top:1039.00px;width:1468.00px;height:2.00px;background:#e0e0e0"></div>
<div style="position:absolute;left:727.00px;top:1040.60px;width:1468.00px;height:128.40px;background:#f5f5f5"></div>
<div style="position:absolute;left:772.00px;top:1058.70px;width:1423.00px;height:20.30px;background:#fff"></div>
<div style="position:absolute;left:772.00px;top:1054.80px;width:1423.00px;height:3.90px;background:#007960"></div>
<div style="position:absolute;left:772.00px;top:1079.00px;width:1423.00px;height:4.00px;background:#007960"></div>
<div style="position:absolute;left:768.90px;top:1049.10px;width:9.90px;height:39.90px;background:#fff;border:3.6px solid #007960;box-sizing:border-box"></div>
<div style="position:absolute;left:848.80px;top:1083.00px;width:2.00px;height:6.00px;background:#cfcfcf"></div>
<div style="position:absolute;left:820.50px;top:1092.37px;font-family:'Liberation Sans', sans-serif;font-size:19.33px;line-height:1;font-weight:400;font-style:normal;letter-spacing:-0.300px;color:#a0a0a0;white-space:nowrap;">Mar 25</div>
<div style="position:absolute;left:1028.20px;top:1083.00px;width:2.00px;height:6.00px;background:#cfcfcf"></div>
<div style="position:absolute;left:999.50px;top:1092.37px;font-family:'Liberation Sans', sans-serif;font-size:19.33px;line-height:1;font-weight:400;font-style:normal;letter-spacing:-0.300px;color:#a0a0a0;white-space:nowrap;">Mar 27</div>
<div style="position:absolute;left:1207.20px;top:1083.00px;width:2.00px;height:6.00px;background:#cfcfcf"></div>
<div style="position:absolute;left:1178.50px;top:1092.37px;font-family:'Liberation Sans', sans-serif;font-size:19.33px;line-height:1;font-weight:400;font-style:normal;letter-spacing:-0.300px;color:#a0a0a0;white-space:nowrap;">Mar 29</div>
<div style="position:absolute;left:1386.60px;top:1083.00px;width:2.00px;height:6.00px;background:#cfcfcf"></div>
<div style="position:absolute;left:1358.00px;top:1092.44px;font-family:'Liberation Sans', sans-serif;font-size:19.24px;line-height:1;font-weight:400;font-style:normal;letter-spacing:-0.400px;color:#a0a0a0;white-space:nowrap;">Mar 31</div>
<div style="position:absolute;left:1475.80px;top:1083.00px;width:2.00px;height:6.00px;background:#cfcfcf"></div>
<div style="position:absolute;left:1446.50px;top:1092.09px;font-family:'Liberation Sans', sans-serif;font-size:19.65px;line-height:1;font-weight:400;font-style:normal;letter-spacing:-0.208px;color:#a0a0a0;white-space:nowrap;">Apr '19</div>
<div style="position:absolute;left:1655.00px;top:1083.00px;width:2.00px;height:6.00px;background:#cfcfcf"></div>
<div style="position:absolute;left:1633.50px;top:1092.37px;font-family:'Liberation Sans', sans-serif;font-size:19.33px;line-height:1;font-weight:400;font-style:normal;letter-spacing:-0.250px;color:#a0a0a0;white-space:nowrap;">Apr 3</div>
<div style="position:absolute;left:1834.30px;top:1083.00px;width:2.00px;height:6.00px;background:#cfcfcf"></div>
<div style="position:absolute;left:1812.50px;top:1092.28px;font-family:'Liberation Sans', sans-serif;font-size:19.43px;line-height:1;font-weight:400;font-style:normal;letter-spacing:-0.250px;color:#a0a0a0;white-space:nowrap;">Apr 5</div>
<div style="position:absolute;left:2013.60px;top:1083.00px;width:2.00px;height:6.00px;background:#cfcfcf"></div>
<div style="position:absolute;left:1992.00px;top:1092.28px;font-family:'Liberation Sans', sans-serif;font-size:19.43px;line-height:1;font-weight:400;font-style:normal;letter-spacing:-0.250px;color:#a0a0a0;white-space:nowrap;">Apr 7</div>
<div style="position:absolute;left:2192.90px;top:1083.00px;width:2.00px;height:6.00px;background:#cfcfcf"></div>
<div style="position:absolute;left:2171.50px;top:1092.28px;font-family:'Liberation Sans', sans-serif;font-size:19.43px;line-height:1;font-weight:400;font-style:normal;letter-spacing:-0.250px;color:#a0a0a0;white-space:nowrap;">Apr 9</div>
<svg style="position:absolute;left:742.90px;top:1129.00px;" width="20.20" height="28.00" viewBox="0 0 20.2 28" preserveAspectRatio="none"><path d="M10.1 0 L20.2 12 H12.9 V26 Q12.9 28 10.35 28 Q7.8 28 7.8 26 V12 H0 Z" fill="#007960"/></svg>
<div style="position:absolute;left:779.80px;top:1137.14px;font-family:'Liberation Sans', sans-serif;font-size:21.96px;line-height:1;font-weight:400;font-style:normal;letter-spacing:0.119px;color:#007960;white-space:nowrap;">3/24/2019</div>
<div style="position:absolute;left:2122.60px;top:1137.17px;font-family:'Liberation Sans', sans-serif;font-size:22.15px;line-height:1;font-weight:400;font-style:normal;letter-spacing:0.125px;color:#007960;white-space:nowrap;">1 month</div>
<div style="position:absolute;left:727.00px;top:1169.00px;width:1439.00px;height:51.70px;background:#007960"></div>
<svg style="position:absolute;left:746.30px;top:1184.30px;" width="30.30" height="22.20" viewBox="0 0 30.3 22.2" preserveAspectRatio="none"><path d="M1.3 0 V20.9 H30.3" fill="none" stroke="#fff" stroke-width="2.6"/><path d="M4.5 18.5 V10 L10.5 3.5 L16 9.5 L21.5 4.5 L28.5 12 V18.5 Z" fill="#fff"/></svg>
<div style="position:absolute;left:783.00px;top:1184.56px;font-family:'Liberation Sans', sans-serif;font-size:24.75px;line-height:1;font-weight:400;font-style:normal;letter-spacing:-0.458px;color:#fff;white-space:nowrap;">Details</div>
<div style="position:absolute;left:2004.00px;top:1172.90px;width:150.90px;height:44.10px;background:#fff;border:2px solid #c8c8c8;border-radius:6px;box-sizing:border-box"></div>
<svg style="position:absolute;left:2016.00px;top:1182.80px;" width="27.00" height="24.00" viewBox="0 0 27 24" preserveAspectRatio="none"><path d="M17.36 10.76 L17.36 12.44 L14.92 13.46 L14.44 14.62 L15.45 17.06 L14.26 18.25 L11.82 17.24 L10.66 17.72 L9.64 20.16 L7.96 20.16 L6.94 17.72 L5.78 17.24 L3.34 18.25 L2.15 17.06 L3.16 14.62 L2.68 13.46 L0.24 12.44 L0.24 10.76 L2.68 9.74 L3.16 8.58 L2.15 6.14 L3.34 4.95 L5.78 5.96 L6.94 5.48 L7.96 3.04 L9.64 3.04 L10.66 5.48 L11.82 5.96 L14.26 4.95 L15.45 6.14 L14.44 8.58 L14.92 9.74Z" fill="#333"/><circle cx="8.8" cy="11.6" r="3.4" fill="#fff"/><path d="M25.76 4.00 L25.76 5.20 L24.25 5.86 L23.82 6.61 L24.00 8.25 L22.96 8.85 L21.63 7.87 L20.77 7.87 L19.44 8.85 L18.40 8.25 L18.58 6.61 L18.15 5.86 L16.64 5.20 L16.64 4.00 L18.15 3.34 L18.58 2.59 L18.40 0.95 L19.44 0.35 L20.77 1.33 L21.63 1.33 L22.96 0.35 L24.00 0.95 L23.82 2.59 L24.25 3.34Z" fill="#333"/><circle cx="21.2" cy="4.6" r="1.7" fill="#fff"/><path d="M25.76 18.00 L25.76 19.20 L24.25 19.86 L23.82 20.61 L24.00 22.25 L22.96 22.85 L21.63 21.87 L20.77 21.87 L19.44 22.85 L18.40 22.25 L18.58 20.61 L18.15 19.86 L16.64 19.20 L16.64 18.00 L18.15 17.34 L18.58 16.59 L18.40 14.95 L19.44 14.35 L20.77 15.33 L21.63 15.33 L22.96 14.35 L24.00 14.95 L23.82 16.59 L24.25 17.34Z" fill="#333"/><circle cx="21.2" cy="18.6" r="1.7" fill="#fff"/></svg>
<div style="position:absolute;left:2047.70px;top:1186.61px;font-family:'Liberation Sans', sans-serif;font-size:19.99px;line-height:1;font-weight:400;font-style:normal;letter-spacing:-0.012px;color:#333;white-space:nowrap;">Customize</div>
<div style="position:absolute;left:2166.00px;top:1169.00px;width:15.00px;height:318.00px;background:#f4f4f4"></div>
<div style="position:absolute;left:2165.00px;top:1169.00px;width:2.00px;height:318.00px;background:#d0d0d0"></div>
<div style="position:absolute;left:2179.20px;top:1169.00px;width:1.80px;height:318.00px;background:#d0d0d0"></div>
<div style="position:absolute;left:2181.00px;top:1169.00px;width:14.00px;height:51.50px;background:#007960"></div>
<div style="position:absolute;left:2181.00px;top:1220.50px;width:14.00px;height:266.50px;background:#fff"></div>
<div style="position:absolute;left:2181.00px;top:1280.50px;width:14.00px;height:3.80px;background:#dcdcdc"></div>
<div style="position:absolute;left:2181.00px;top:1284.30px;width:14.00px;height:46.10px;background:#f8f8f8"></div>
<div style="position:absolute;left:2181.00px;top:1329.40px;width:14.00px;height:2.00px;background:#dedede"></div>
<div style="position:absolute;left:2181.00px;top:1376.70px;width:14.00px;height:2.00px;background:#dedede"></div>
<div style="position:absolute;left:2181.00px;top:1424.00px;width:14.00px;height:2.00px;background:#dedede"></div>
<div style="position:absolute;left:2181.00px;top:1470.80px;width:14.00px;height:2.00px;background:#dedede"></div>
<div style="position:absolute;left:2192.50px;top:1246.80px;width:6.50px;height:20.00px;border:2px solid #222;border-radius:4px;box-sizing:border-box"></div>
<div style="position:absolute;left:2192.50px;top:1343.50px;width:6.50px;height:20.00px;border:2px solid #222;border-radius:4px;box-sizing:border-box"></div>
<div style="position:absolute;left:2192.50px;top:1389.70px;width:6.50px;height:20.00px;border:2px solid #222;border-radius:4px;box-sizing:border-box"></div>
<div style="position:absolute;left:2192.50px;top:1437.00px;width:6.50px;height:20.00px;border:2px solid #222;border-radius:4px;box-sizing:border-box"></div>
<svg style="position:absolute;left:2190px;top:1297px" width="5" height="20"><circle cx="11" cy="10" r="9.5" fill="none" stroke="#bbb" stroke-width="2.4"/></svg>
<div style="position:absolute;left:2168.60px;top:1410.70px;width:2.60px;height:16.50px;background:#888"></div>
<div style="position:absolute;left:2174.40px;top:1410.70px;width:2.60px;height:16.50px;background:#888"></div>
<div style="position:absolute;left:727.00px;top:1220.70px;width:1438.00px;height:266.30px;background:#fff"></div>
<div style="position:absolute;left:727.00px;top:1273.30px;width:1438.00px;height:3.70px;background:#dddddd"></div>
<div style="position:absolute;left:727.00px;top:1277.00px;width:1438.00px;height:45.50px;background:#f8f8f8"></div>
<div style="position:absolute;left:727.00px;top:1322.50px;width:1438.00px;height:1.50px;background:#dddddd"></div>
<div style="position:absolute;left:727.00px;top:1369.30px;width:1438.00px;height:1.50px;background:#dddddd"></div>
<div style="position:absolute;left:727.00px;top:1370.80px;width:1438.00px;height:44.40px;background:#f8f8f8"></div>
<svg style="position:absolute;left:877.80px;top:1243.40px;" width="17.50" height="17.00" viewBox="0 0 17.5 17" preserveAspectRatio="none"><path d="M2.2 2.2 L15.3 14.8 M15.3 2.2 L2.2 14.8" stroke="#777" stroke-width="4.2" stroke-linecap="round"/></svg>
<div style="position:absolute;left:917.60px;top:1239.90px;width:20.30px;height:20.30px;border:1.8px solid #333;border-radius:3.5px;box-sizing:border-box"></div>
<svg style="position:absolute;left:1014.30px;top:1240.90px;" width="16.00" height="20.30" viewBox="0 0 16 20.3" preserveAspectRatio="none"><path d="M8 0 L15.6 8.2 H0.4 Z M0.4 11.8 H15.6 L8 20.3 Z" fill="#777"/></svg>
<svg style="position:absolute;left:1131.30px;top:1240.90px;" width="16.00" height="20.30" viewBox="0 0 16 20.3" preserveAspectRatio="none"><path d="M8 0 L15.6 8.2 H0.4 Z M0.4 11.8 H15.6 L8 20.3 Z" fill="#777"/></svg>
<div style="position:absolute;left:1052.10px;top:1240.09px;font-family:'Liberation Sans', sans-serif;font-size:24.96px;line-height:1;font-weight:400;font-style:normal;letter-spacing:-0.800px;color:#333;white-space:nowrap;">Name</div>
<div style="position:absolute;left:1916.00px;top:1240.45px;font-family:'Liberation Sans', sans-serif;font-size:24.53px;line-height:1;font-weight:400;font-style:normal;letter-spacing:-0.750px;color:#333;white-space:nowrap;">Assets</div>
<svg style="position:absolute;left:2119.20px;top:1233.00px;" width="28.00" height="24.00" viewBox="0 0 28 24" preserveAspectRatio="none"><g fill="none" stroke="#333" stroke-width="1.7"><rect x="0.85" y="0.85" width="20" height="19"/><path d="M7.5 0.85 V19.85 M14.1 0.85 V19.85 M0.85 7.2 H20.85 M0.85 13.5 H20.85"/></g><circle cx="18.9" cy="14.6" r="9" fill="#333"/><path d="M18.9 9.8 V19.4 M14.1 14.6 H23.7" stroke="#fff" stroke-width="2.8"/></svg>
<svg style="position:absolute;left:787.20px;top:1289.60px;" width="24.00" height="23.40" viewBox="0 0 24 23.4" preserveAspectRatio="none"><path d="M23.6 0.2 Q15.5 0.2 10.5 6.2 L5.8 6.4 L0.2 13 L5.5 12.6 L4.8 14 L9.5 18.7 L10.9 18 L10.6 23.2 L17.2 17.6 L17.4 12.9 Q23.6 8 23.6 0.2 Z" fill="#007960"/><circle cx="18.2" cy="5.4" r="1.5" fill="#fff"/><path d="M4.2 15.6 L1.2 19.6 L0.8 22.6 L3.8 22.2 L7.8 19.2 Z" fill="#007960"/></svg>
<svg style="position:absolute;left:837.00px;top:1286.80px;" width="22.20" height="22.20" viewBox="0 0 22.2 22.2" preserveAspectRatio="none"><circle cx="11.1" cy="11.1" r="11.1" fill="#007960"/><g fill="#fff"><circle cx="11.3" cy="5.6" r="2.1"/><path d="M8 8.8 H12.9 V15.4 H14.4 V17.8 H8.2 V15.4 H9.6 V11.2 H8 Z"/></g></svg>
<svg style="position:absolute;left:877.60px;top:1290.10px;" width="17.50" height="17.00" viewBox="0 0 17.5 17" preserveAspectRatio="none"><path d="M2.2 2.2 L15.3 14.8 M15.3 2.2 L2.2 14.8" stroke="#007960" stroke-width="4.2" stroke-linecap="round"/></svg>
<div style="position:absolute;left:917.60px;top:1288.60px;width:20.30px;height:20.30px;border:1.8px solid #333;border-radius:3.5px;box-sizing:border-box"></div>
<svg style="position:absolute;left:962.50px;top:1283.10px;" width="29.00" height="27.50" viewBox="0 0 29 27.5" preserveAspectRatio="none"><path d="M1.6 17.8 L6.1 1.8 L13.5 19.7 L16.6 7.4 L21.5 25.6 L27.4 15.6" fill="none" stroke="#3f55b0" stroke-width="3.2" stroke-linejoin="round" stroke-linecap="round"/></svg>
<div style="position:absolute;left:1005.90px;top:1290.17px;font-family:'Liberation Sans', sans-serif;font-size:23.09px;line-height:1;font-weight:400;font-style:normal;letter-spacing:-1.550px;color:#555;white-space:nowrap;">kW</div>
<div style="position:absolute;left:1052.10px;top:1288.37px;font-family:'Liberation Sans', sans-serif;font-size:25.21px;line-height:1;font-weight:400;font-style:normal;letter-spacing:-0.387px;color:#333;white-space:nowrap;">Compressor Power</div>
<svg style="position:absolute;left:734.90px;top:1333.50px;" width="26.20" height="20.40" viewBox="0 0 26.2 20.4" preserveAspectRatio="none"><path d="M13 2.2 H4.2 Q1.2 2.2 1.2 5.2 V16.2 Q1.2 19.2 4.2 19.2 H15.2 Q18.2 19.2 18.2 16.2 V12.2" fill="none" stroke="#007960" stroke-width="2"/><path d="M22.3 0.6 L25.6 3.9 L12.6 16.9 L8.2 17.9 L9.2 13.5 Z" fill="#007960"/><path d="M10.6 14.2 L12 15.6" stroke="#fff" stroke-width="1.2"/></svg>
<svg style="position:absolute;left:787.20px;top:1336.30px;" width="24.00" height="23.40" viewBox="0 0 24 23.4" preserveAspectRatio="none"><path d="M23.6 0.2 Q15.5 0.2 10.5 6.2 L5.8 6.4 L0.2 13 L5.5 12.6 L4.8 14 L9.5 18.7 L10.9 18 L10.6 23.2 L17.2 17.6 L17.4 12.9 Q23.6 8 23.6 0.2 Z" fill="#007960"/><circle cx="18.2" cy="5.4" r="1.5" fill="#fff"/><path d="M4.2 15.6 L1.2 19.6 L0.8 22.6 L3.8 22.2 L7.8 19.2 Z" fill="#007960"/></svg>
<svg style="position:absolute;left:837.00px;top:1333.50px;" width="22.20" height="22.20" viewBox="0 0 22.2 22.2" preserveAspectRatio="none"><circle cx="11.1" cy="11.1" r="11.1" fill="#007960"/><g fill="#fff"><circle cx="11.3" cy="5.6" r="2.1"/><path d="M8 8.8 H12.9 V15.4 H14.4 V17.8 H8.2 V15.4 H9.6 V11.2 H8 Z"/></g></svg>
<svg style="position:absolute;left:877.60px;top:1336.80px;" width="17.50" height="17.00" viewBox="0 0 17.5 17" preserveAspectRatio="none"><path d="M2.2 2.2 L15.3 14.8 M15.3 2.2 L2.2 14.8" stroke="#007960" stroke-width="4.2" stroke-linecap="round"/></svg>
<div style="position:absolute;left:917.60px;top:1335.30px;width:20.30px;height:20.30px;border:1.8px solid #333;border-radius:3.5px;box-sizing:border-box"></div>
<svg style="position:absolute;left:965.20px;top:1329.80px;" width="23.10" height="27.90" viewBox="0 0 23.1 27.9" preserveAspectRatio="none"><rect x="0" y="0" width="9.7" height="27.9" rx="1.6" fill="#0d9048"/><rect x="11.6" y="0" width="9.7" height="27.9" rx="1.6" fill="#0d9048"/>
<path d="M-0.5 13.3 L2.2 16.5 L4.8 3.6 L7.5 21.9 L9.7 17.9 L11.6 13.3 L13.4 16 L16.4 3.6 L19.1 21.9 L21.5 17.5" fill="none" stroke="#fff" stroke-width="1.9" stroke-linejoin="miter"/></svg>
<div style="position:absolute;left:1052.10px;top:1335.70px;font-family:'Liberation Sans', sans-serif;font-size:24.48px;line-height:1;font-weight:400;font-style:normal;letter-spacing:-0.975px;color:#333;white-space:nowrap;">Weeks</div>
<svg style="position:absolute;left:734.90px;top:1380.20px;" width="26.20" height="20.40" viewBox="0 0 26.2 20.4" preserveAspectRatio="none"><path d="M13 2.2 H4.2 Q1.2 2.2 1.2 5.2 V16.2 Q1.2 19.2 4.2 19.2 H15.2 Q18.2 19.2 18.2 16.2 V12.2" fill="none" stroke="#007960" stroke-width="2"/><path d="M22.3 0.6 L25.6 3.9 L12.6 16.9 L8.2 17.9 L9.2 13.5 Z" fill="#007960"/><path d="M10.6 14.2 L12 15.6" stroke="#fff" stroke-width="1.2"/></svg>
<svg style="position:absolute;left:787.20px;top:1383.00px;" width="24.00" height="23.40" viewBox="0 0 24 23.4" preserveAspectRatio="none"><path d="M23.6 0.2 Q15.5 0.2 10.5 6.2 L5.8 6.4 L0.2 13 L5.5 12.6 L4.8 14 L9.5 18.7 L10.9 18 L10.6 23.2 L17.2 17.6 L17.4 12.9 Q23.6 8 23.6 0.2 Z" fill="#007960"/><circle cx="18.2" cy="5.4" r="1.5" fill="#fff"/><path d="M4.2 15.6 L1.2 19.6 L0.8 22.6 L3.8 22.2 L7.8 19.2 Z" fill="#007960"/></svg>
<svg style="position:absolute;left:837.00px;top:1380.20px;" width="22.20" height="22.20" viewBox="0 0 22.2 22.2" preserveAspectRatio="none"><circle cx="11.1" cy="11.1" r="11.1" fill="#007960"/><g fill="#fff"><circle cx="11.3" cy="5.6" r="2.1"/><path d="M8 8.8 H12.9 V15.4 H14.4 V17.8 H8.2 V15.4 H9.6 V11.2 H8 Z"/></g></svg>
<svg style="position:absolute;left:877.60px;top:1383.50px;" width="17.50" height="17.00" viewBox="0 0 17.5 17" preserveAspectRatio="none"><path d="M2.2 2.2 L15.3 14.8 M15.3 2.2 L2.2 14.8" stroke="#007960" stroke-width="4.2" stroke-linecap="round"/></svg>
<div style="position:absolute;left:917.60px;top:1382.00px;width:20.30px;height:20.30px;border:1.8px solid #333;border-radius:3.5px;box-sizing:border-box"></div>
<svg style="position:absolute;left:965.20px;top:1377.30px;" width="23.10" height="27.90" viewBox="0 0 23.1 27.9" preserveAspectRatio="none"><rect x="0" y="0" width="9.7" height="27.9" rx="1.6" fill="#d0561b"/><rect x="11.6" y="0" width="9.7" height="27.9" rx="1.6" fill="#d0561b"/>
<path d="M-0.5 13.3 L2.2 16.5 L4.8 3.6 L7.5 21.9 L9.7 17.9 L11.6 13.3 L13.4 16 L16.4 3.6 L19.1 21.9 L21.5 17.5" fill="none" stroke="#f8f8f8" stroke-width="1.9" stroke-linejoin="miter"/></svg>
<div style="position:absolute;left:1052.10px;top:1381.71px;font-family:'Liberation Sans', sans-serif;font-size:25.28px;line-height:1;font-weight:400;font-style:normal;letter-spacing:-0.303px;color:#333;white-space:nowrap;">Compressor Running</div>
<div style="position:absolute;left:1916.00px;top:1289.21px;font-family:'Liberation Sans', sans-serif;font-size:24.22px;line-height:1;font-weight:400;font-style:normal;letter-spacing:-1.000px;color:#007960;white-space:nowrap;">Area A</div>
<div style="position:absolute;left:1916.00px;top:1312.50px;width:68.00px;height:1.80px;background:#007960"></div>
<div style="position:absolute;left:1916.00px;top:1382.61px;font-family:'Liberation Sans', sans-serif;font-size:24.22px;line-height:1;font-weight:400;font-style:normal;letter-spacing:-1.000px;color:#007960;white-space:nowrap;">Area A</div>
<div style="position:absolute;left:1916.00px;top:1405.90px;width:68.00px;height:1.80px;background:#007960"></div>
</body></html>
